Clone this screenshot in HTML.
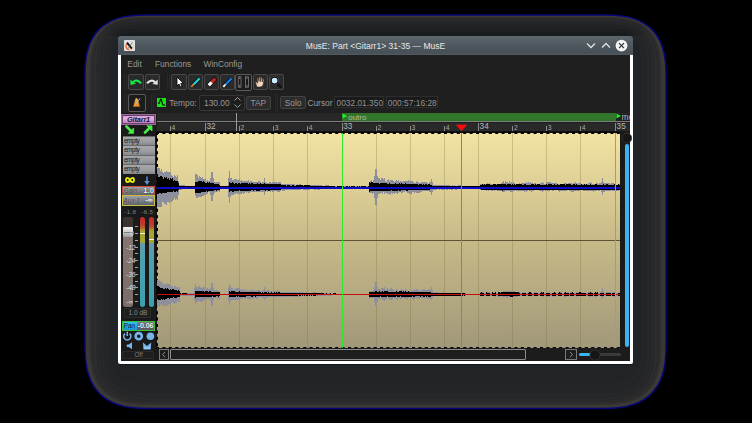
<!DOCTYPE html><html><head><meta charset="utf-8"><style>
html,body{margin:0;padding:0;background:#000;width:752px;height:423px;overflow:hidden;font-family:"Liberation Sans",sans-serif}
div{box-sizing:border-box;position:absolute}
</style></head><body>
<svg style="position:absolute;left:0;top:0" width="752" height="423"><path d="M84.20 78.30 L84.43 66.84 L85.11 59.23 L86.25 52.70 L87.85 46.88 L89.89 41.64 L92.38 36.89 L95.31 32.61 L98.69 28.79 L102.51 25.41 L106.79 22.48 L111.54 19.99 L116.78 17.95 L122.60 16.35 L129.13 15.21 L136.74 14.53 L148.20 14.30 L602.80 14.30 L614.26 14.53 L621.87 15.21 L628.40 16.35 L634.22 17.95 L639.46 19.99 L644.21 22.48 L648.49 25.41 L652.31 28.79 L655.69 32.61 L658.62 36.89 L661.11 41.64 L663.15 46.88 L664.75 52.70 L665.89 59.23 L666.57 66.84 L666.80 78.30 L666.80 343.20 L666.56 355.01 L665.86 362.87 L664.68 369.60 L663.04 375.60 L660.93 381.01 L658.37 385.90 L655.34 390.31 L651.86 394.26 L647.91 397.74 L643.50 400.77 L638.61 403.33 L633.20 405.44 L627.20 407.08 L620.47 408.26 L612.61 408.96 L600.80 409.20 L150.20 409.20 L138.39 408.96 L130.53 408.26 L123.80 407.08 L117.80 405.44 L112.39 403.33 L107.50 400.77 L103.09 397.74 L99.14 394.26 L95.66 390.31 L92.63 385.90 L90.07 381.01 L87.96 375.60 L86.32 369.60 L85.14 362.87 L84.44 355.01 L84.20 343.20 Z" fill="#06067a"/><path d="M85.70 77.85 L85.92 66.74 L86.59 59.36 L87.69 53.03 L89.23 47.39 L91.21 42.30 L93.63 37.70 L96.47 33.56 L99.75 29.85 L103.46 26.57 L107.60 23.73 L112.20 21.31 L117.29 19.33 L122.93 17.79 L129.26 16.69 L136.64 16.02 L147.75 15.80 L603.25 15.80 L614.36 16.02 L621.74 16.69 L628.07 17.79 L633.71 19.33 L638.80 21.31 L643.40 23.73 L647.54 26.57 L651.25 29.85 L654.53 33.56 L657.37 37.70 L659.79 42.30 L661.77 47.39 L663.31 53.03 L664.41 59.36 L665.08 66.74 L665.30 77.85 L665.30 343.35 L665.07 354.87 L664.38 362.53 L663.24 369.09 L661.63 374.94 L659.58 380.21 L657.08 384.99 L654.13 389.29 L650.73 393.13 L646.89 396.53 L642.59 399.48 L637.81 401.98 L632.54 404.03 L626.69 405.64 L620.13 406.78 L612.47 407.47 L600.95 407.70 L150.05 407.70 L138.53 407.47 L130.87 406.78 L124.31 405.64 L118.46 404.03 L113.19 401.98 L108.41 399.48 L104.11 396.53 L100.27 393.13 L96.87 389.29 L93.92 384.99 L91.42 380.21 L89.37 374.94 L87.76 369.09 L86.62 362.53 L85.93 354.87 L85.70 343.35 Z" fill="#3a3935"/><path d="M89.70 73.75 L89.90 63.57 L90.51 56.81 L91.52 51.01 L92.94 45.84 L94.75 41.18 L96.96 36.97 L99.57 33.17 L102.57 29.77 L105.97 26.77 L109.77 24.16 L113.98 21.95 L118.64 20.14 L123.81 18.72 L129.61 17.71 L136.37 17.10 L146.55 16.90 L604.45 16.90 L614.63 17.10 L621.39 17.71 L627.19 18.72 L632.36 20.14 L637.02 21.95 L641.23 24.16 L645.03 26.77 L648.43 29.77 L651.43 33.17 L654.04 36.97 L656.25 41.18 L658.06 45.84 L659.48 51.01 L660.49 56.81 L661.10 63.57 L661.30 73.75 L661.30 344.75 L661.09 355.48 L660.44 362.62 L659.38 368.73 L657.89 374.18 L655.97 379.09 L653.64 383.54 L650.89 387.54 L647.73 391.13 L644.14 394.29 L640.14 397.04 L635.69 399.37 L630.78 401.29 L625.33 402.78 L619.22 403.84 L612.08 404.49 L601.35 404.70 L149.65 404.70 L138.92 404.49 L131.78 403.84 L125.67 402.78 L120.22 401.29 L115.31 399.37 L110.86 397.04 L106.86 394.29 L103.27 391.13 L100.11 387.54 L97.36 383.54 L95.03 379.09 L93.11 374.18 L91.62 368.73 L90.56 362.62 L89.91 355.48 L89.70 344.75 Z" fill="#302f2e"/><path d="M91.70 72.55 L91.89 62.84 L92.47 56.38 L93.44 50.85 L94.79 45.92 L96.52 41.47 L98.63 37.45 L101.12 33.82 L103.98 30.58 L107.22 27.72 L110.85 25.23 L114.87 23.12 L119.32 21.39 L124.25 20.04 L129.78 19.07 L136.24 18.49 L145.95 18.30 L605.05 18.30 L614.76 18.49 L621.22 19.07 L626.75 20.04 L631.68 21.39 L636.13 23.12 L640.15 25.23 L643.78 27.72 L647.02 30.58 L649.88 33.82 L652.37 37.45 L654.48 41.47 L656.21 45.92 L657.56 50.85 L658.53 56.38 L659.11 62.84 L659.30 72.55 L659.30 344.95 L659.09 355.29 L658.48 362.16 L657.45 368.05 L656.01 373.30 L654.17 378.03 L651.92 382.32 L649.27 386.17 L646.22 389.62 L642.77 392.67 L638.92 395.32 L634.63 397.57 L629.90 399.41 L624.65 400.85 L618.76 401.88 L611.89 402.49 L601.55 402.70 L149.45 402.70 L139.11 402.49 L132.24 401.88 L126.35 400.85 L121.10 399.41 L116.37 397.57 L112.08 395.32 L108.23 392.67 L104.78 389.62 L101.73 386.17 L99.08 382.32 L96.83 378.03 L94.99 373.30 L93.55 368.05 L92.52 362.16 L91.91 355.29 L91.70 344.95 Z" fill="#2a2a2c"/><path d="M93.70 71.95 L93.88 62.71 L94.44 56.56 L95.36 51.29 L96.64 46.60 L98.29 42.36 L100.30 38.53 L102.67 35.08 L105.39 31.99 L108.48 29.27 L111.93 26.90 L115.76 24.89 L120.00 23.24 L124.69 21.96 L129.96 21.04 L136.11 20.48 L145.35 20.30 L605.65 20.30 L614.89 20.48 L621.04 21.04 L626.31 21.96 L631.00 23.24 L635.24 24.89 L639.07 26.90 L642.52 29.27 L645.61 31.99 L648.33 35.08 L650.70 38.53 L652.71 42.36 L654.36 46.60 L655.64 51.29 L656.56 56.56 L657.12 62.71 L657.30 71.95 L657.30 346.15 L657.10 356.09 L656.51 362.71 L655.52 368.37 L654.14 373.42 L652.36 377.97 L650.20 382.09 L647.65 385.80 L644.72 389.12 L641.40 392.05 L637.69 394.60 L633.57 396.76 L629.02 398.54 L623.97 399.92 L618.31 400.91 L611.69 401.50 L601.75 401.70 L149.25 401.70 L139.31 401.50 L132.69 400.91 L127.03 399.92 L121.98 398.54 L117.43 396.76 L113.31 394.60 L109.60 392.05 L106.28 389.12 L103.35 385.80 L100.80 382.09 L98.64 377.97 L96.86 373.42 L95.48 368.37 L94.49 362.71 L93.90 356.09 L93.70 346.15 Z" fill="#2c2d2d"/><path d="M96.20 69.70 L96.37 61.04 L96.89 55.28 L97.75 50.34 L98.96 45.94 L100.50 41.97 L102.38 38.38 L104.60 35.15 L107.16 32.26 L110.05 29.70 L113.28 27.48 L116.87 25.60 L120.84 24.06 L125.24 22.85 L130.18 21.99 L135.94 21.47 L144.60 21.30 L606.40 21.30 L615.06 21.47 L620.82 21.99 L625.76 22.85 L630.16 24.06 L634.13 25.60 L637.72 27.48 L640.95 29.70 L643.84 32.26 L646.40 35.15 L648.62 38.38 L650.50 41.97 L652.04 45.94 L653.25 50.34 L654.11 55.28 L654.63 61.04 L654.80 69.70 L654.80 347.90 L654.61 357.35 L654.05 363.64 L653.11 369.02 L651.79 373.82 L650.11 378.15 L648.05 382.06 L645.63 385.59 L642.85 388.75 L639.69 391.53 L636.16 393.95 L632.25 396.01 L627.92 397.69 L623.12 399.01 L617.74 399.95 L611.45 400.51 L602.00 400.70 L149.00 400.70 L139.55 400.51 L133.26 399.95 L127.88 399.01 L123.08 397.69 L118.75 396.01 L114.84 393.95 L111.31 391.53 L108.15 388.75 L105.37 385.59 L102.95 382.06 L100.89 378.15 L99.21 373.82 L97.89 369.02 L96.95 363.64 L96.39 357.35 L96.20 347.90 Z" fill="#27282c"/><path d="M97.20 69.40 L97.37 60.97 L97.87 55.36 L98.71 50.56 L99.88 46.28 L101.39 42.42 L103.22 38.93 L105.38 35.78 L107.86 32.96 L110.68 30.48 L113.83 28.32 L117.32 26.49 L121.18 24.98 L125.46 23.81 L130.26 22.97 L135.87 22.47 L144.30 22.30 L606.70 22.30 L615.13 22.47 L620.74 22.97 L625.54 23.81 L629.82 24.98 L633.68 26.49 L637.17 28.32 L640.32 30.48 L643.14 32.96 L645.62 35.78 L647.78 38.93 L649.61 42.42 L651.12 46.28 L652.29 50.56 L653.13 55.36 L653.63 60.97 L653.80 69.40 L653.80 348.00 L653.62 357.25 L653.06 363.41 L652.14 368.68 L650.86 373.38 L649.21 377.62 L647.19 381.45 L644.82 384.91 L642.09 387.99 L639.01 390.72 L635.55 393.09 L631.72 395.11 L627.48 396.76 L622.78 398.04 L617.51 398.96 L611.35 399.52 L602.10 399.70 L148.90 399.70 L139.65 399.52 L133.49 398.96 L128.22 398.04 L123.52 396.76 L119.28 395.11 L115.45 393.09 L111.99 390.72 L108.91 387.99 L106.18 384.91 L103.81 381.45 L101.79 377.62 L100.14 373.38 L98.86 368.68 L97.94 363.41 L97.38 357.25 L97.20 348.00 Z" fill="#28292a"/><path d="M100.20 68.00 L100.35 60.27 L100.82 55.13 L101.59 50.72 L102.66 46.79 L104.04 43.25 L105.72 40.05 L107.70 37.16 L109.98 34.58 L112.56 32.30 L115.45 30.32 L118.65 28.64 L122.19 27.26 L126.12 26.19 L130.53 25.42 L135.67 24.95 L143.40 24.80 L607.60 24.80 L615.33 24.95 L620.47 25.42 L624.88 26.19 L628.81 27.26 L632.35 28.64 L635.55 30.32 L638.44 32.30 L641.02 34.58 L643.30 37.16 L645.28 40.05 L646.96 43.25 L648.34 46.79 L649.41 50.72 L650.18 55.13 L650.65 60.27 L650.80 68.00 L650.80 348.80 L650.63 357.46 L650.11 363.22 L649.25 368.16 L648.04 372.56 L646.50 376.53 L644.62 380.12 L642.40 383.35 L639.84 386.24 L636.95 388.80 L633.72 391.02 L630.13 392.90 L626.16 394.44 L621.76 395.65 L616.82 396.51 L611.06 397.03 L602.40 397.20 L148.60 397.20 L139.94 397.03 L134.18 396.51 L129.24 395.65 L124.84 394.44 L120.87 392.90 L117.28 391.02 L114.05 388.80 L111.16 386.24 L108.60 383.35 L106.38 380.12 L104.50 376.53 L102.96 372.56 L101.75 368.16 L100.89 363.22 L100.37 357.46 L100.20 348.80 Z" fill="#242629"/><path d="M101.20 67.70 L101.35 60.20 L101.80 55.21 L102.54 50.94 L103.59 47.13 L104.92 43.70 L106.55 40.59 L108.48 37.79 L110.69 35.29 L113.19 33.08 L115.99 31.15 L119.10 29.52 L122.53 28.19 L126.34 27.14 L130.61 26.40 L135.60 25.95 L143.10 25.80 L607.90 25.80 L615.40 25.95 L620.39 26.40 L624.66 27.14 L628.47 28.19 L631.90 29.52 L635.01 31.15 L637.81 33.08 L640.31 35.29 L642.52 37.79 L644.45 40.59 L646.08 43.70 L647.41 47.13 L648.46 50.94 L649.20 55.21 L649.65 60.20 L649.80 67.70 L649.80 348.90 L649.63 357.37 L649.13 363.00 L648.28 367.82 L647.11 372.12 L645.60 376.00 L643.76 379.50 L641.59 382.66 L639.09 385.49 L636.26 387.99 L633.10 390.16 L629.60 392.00 L625.72 393.51 L621.42 394.68 L616.60 395.53 L610.97 396.03 L602.50 396.20 L148.50 396.20 L140.03 396.03 L134.40 395.53 L129.58 394.68 L125.28 393.51 L121.40 392.00 L117.90 390.16 L114.74 387.99 L111.91 385.49 L109.41 382.66 L107.24 379.50 L105.40 376.00 L103.89 372.12 L102.72 367.82 L101.87 363.00 L101.37 357.37 L101.20 348.90 Z" fill="#26282a"/><path d="M104.20 66.30 L104.34 59.50 L104.74 54.98 L105.42 51.10 L106.36 47.65 L107.58 44.53 L109.06 41.71 L110.80 39.17 L112.80 36.90 L115.07 34.90 L117.61 33.16 L120.43 31.68 L123.55 30.46 L127.00 29.52 L130.88 28.84 L135.40 28.44 L142.20 28.30 L608.80 28.30 L615.60 28.44 L620.12 28.84 L624.00 29.52 L627.45 30.46 L630.57 31.68 L633.39 33.16 L635.93 34.90 L638.20 36.90 L640.20 39.17 L641.94 41.71 L643.42 44.53 L644.64 47.65 L645.58 51.10 L646.26 54.98 L646.66 59.50 L646.80 66.30 L646.80 349.20 L646.64 357.08 L646.17 362.31 L645.39 366.80 L644.29 370.80 L642.89 374.41 L641.18 377.67 L639.16 380.61 L636.84 383.24 L634.21 385.56 L631.27 387.58 L628.01 389.29 L624.40 390.69 L620.40 391.79 L615.91 392.57 L610.68 393.04 L602.80 393.20 L148.20 393.20 L140.32 393.04 L135.09 392.57 L130.60 391.79 L126.60 390.69 L122.99 389.29 L119.73 387.58 L116.79 385.56 L114.16 383.24 L111.84 380.61 L109.82 377.67 L108.11 374.41 L106.71 370.80 L105.61 366.80 L104.83 362.31 L104.36 357.08 L104.20 349.20 Z" fill="#222628"/><path d="M110.20 62.50 L110.31 57.09 L110.63 53.50 L111.17 50.42 L111.92 47.67 L112.88 45.20 L114.06 42.96 L115.44 40.94 L117.04 39.14 L118.84 37.54 L120.86 36.16 L123.10 34.98 L125.57 34.02 L128.32 33.27 L131.40 32.73 L134.99 32.41 L140.40 32.30 L610.60 32.30 L616.01 32.41 L619.60 32.73 L622.68 33.27 L625.43 34.02 L627.90 34.98 L630.14 36.16 L632.16 37.54 L633.96 39.14 L635.56 40.94 L636.94 42.96 L638.12 45.20 L639.08 47.67 L639.83 50.42 L640.37 53.50 L640.69 57.09 L640.80 62.50 L640.80 345.80 L640.67 352.49 L640.27 356.95 L639.60 360.76 L638.67 364.16 L637.48 367.23 L636.02 370.00 L634.31 372.50 L632.33 374.73 L630.10 376.71 L627.60 378.42 L624.83 379.88 L621.76 381.07 L618.36 382.00 L614.55 382.67 L610.09 383.07 L603.40 383.20 L147.60 383.20 L140.91 383.07 L136.45 382.67 L132.64 382.00 L129.24 381.07 L126.17 379.88 L123.40 378.42 L120.90 376.71 L118.67 374.73 L116.69 372.50 L114.98 370.00 L113.52 367.23 L112.33 364.16 L111.40 360.76 L110.73 356.95 L110.33 352.49 L110.20 345.80 Z" fill="#202426"/></svg>
<div style="left:104.00px;top:20.30px;width:543.00px;height:15.70px;background:linear-gradient(rgba(0,0,0,0),rgba(0,0,0,0.25));-webkit-mask-image:linear-gradient(to right,transparent,#000 20px,#000 calc(100% - 20px),transparent)"></div>
<div style="left:119.00px;top:363.70px;width:513.00px;height:1.30px;background:#141516"></div>
<div style="left:118.00px;top:54.00px;width:515.00px;height:310.00px;background:#fff;border-radius:0 0 2px 2px"></div>
<div style="left:118.00px;top:36.00px;width:515.00px;height:18.60px;background:linear-gradient(#5c666d,#4f585f 50%,#475057 90%,#545d64);border-radius:3px 3px 0 0"></div>
<svg style="position:absolute;left:124px;top:40px;" width="11" height="11" viewBox="0 0 11 11"><rect x="0" y="0" width="11" height="11" rx="0.8" fill="#dfe3e6"/><path d="M4.2 3.2 A3.3 3.3 0 0 0 5.5 9.6" fill="none" stroke="#ec6a2a" stroke-width="1.3"/><path d="M5.5 9.6 A3.3 3.3 0 0 0 8.2 4" fill="none" stroke="#f2c890" stroke-width="1"/><path d="M3 2.6 L7.8 8.6" stroke="#0c0c0c" stroke-width="1.8"/><path d="M8.6 2.2 L4 8.4" stroke="#5a5a5a" stroke-width="0.7"/></svg>
<div style="left:305.80px;top:41.60px;font-size:8.5px;line-height:8.5px;color:#e6e8ea;white-space:pre;">MusE: Part &lt;Gitarr1&gt; 31-35 — MusE</div>
<svg style="position:absolute;left:586px;top:42px;" width="10" height="7" viewBox="0 0 10 7"><path d="M1 1.5 L5 5.5 L9 1.5" fill="none" stroke="#e0e2e4" stroke-width="1.3"/></svg>
<svg style="position:absolute;left:601px;top:42px;" width="10" height="7" viewBox="0 0 10 7"><path d="M1 5.5 L5 1.5 L9 5.5" fill="none" stroke="#e0e2e4" stroke-width="1.3"/></svg>
<svg style="position:absolute;left:615px;top:39px;" width="13" height="13" viewBox="0 0 13 13"><circle cx="6.5" cy="6.6" r="5.9" fill="#f4f4f4"/><path d="M4 4.1 L9 9.1 M9 4.1 L4 9.1" stroke="#2a2e32" stroke-width="1.2"/></svg>
<div style="left:121.00px;top:54.60px;width:509.00px;height:306.40px;background:#1f1f1f"></div>
<div style="left:127.30px;top:60.10px;font-size:8.4px;line-height:8.4px;color:#989898;white-space:pre;">Edit</div>
<div style="left:155.00px;top:60.10px;font-size:8.4px;line-height:8.4px;color:#989898;white-space:pre;">Functions</div>
<div style="left:203.50px;top:60.10px;font-size:8.4px;line-height:8.4px;color:#989898;white-space:pre;">WinConfig</div>
<div style="left:123.50px;top:74.00px;width:1.00px;height:16.00px;background:#292929"></div>
<div style="left:125.50px;top:74.00px;width:1.00px;height:16.00px;background:#292929"></div>
<div style="left:166.80px;top:74.00px;width:1.00px;height:16.00px;background:#292929"></div>
<div style="left:168.80px;top:74.00px;width:1.00px;height:16.00px;background:#292929"></div>
<div style="left:123.50px;top:94.00px;width:1.00px;height:18.00px;background:#292929"></div>
<div style="left:125.50px;top:94.00px;width:1.00px;height:18.00px;background:#292929"></div>
<div style="left:151.00px;top:94.00px;width:1.00px;height:18.00px;background:#292929"></div>
<div style="left:153.00px;top:94.00px;width:1.00px;height:18.00px;background:#292929"></div>
<div style="left:275.00px;top:94.00px;width:1.00px;height:18.00px;background:#292929"></div>
<div style="left:277.00px;top:94.00px;width:1.00px;height:18.00px;background:#292929"></div>
<div style="left:128.20px;top:74.40px;width:16.00px;height:15.40px;background:#2a2a2a;border:1px solid #484848;border-radius:2px"></div>
<div style="left:144.60px;top:74.40px;width:15.40px;height:15.40px;background:#2a2a2a;border:1px solid #484848;border-radius:2px"></div>
<div style="left:171.20px;top:74.40px;width:15.40px;height:15.40px;background:#2a2a2a;border:1px solid #484848;border-radius:2px"></div>
<div style="left:187.60px;top:74.40px;width:15.40px;height:15.40px;background:#2a2a2a;border:1px solid #484848;border-radius:2px"></div>
<div style="left:203.60px;top:74.40px;width:15.40px;height:15.40px;background:#2a2a2a;border:1px solid #484848;border-radius:2px"></div>
<div style="left:219.60px;top:74.40px;width:15.40px;height:15.40px;background:#2a2a2a;border:1px solid #484848;border-radius:2px"></div>
<div style="left:235.40px;top:73.60px;width:16.60px;height:17.20px;background:#1c1c1c;border:1px solid #5a5a5a;border-radius:2px"></div>
<div style="left:252.70px;top:74.40px;width:15.40px;height:15.40px;background:#2a2a2a;border:1px solid #484848;border-radius:2px"></div>
<div style="left:268.70px;top:74.40px;width:15.40px;height:15.40px;background:#2a2a2a;border:1px solid #484848;border-radius:2px"></div>
<svg style="position:absolute;left:122px;top:70px;" width="40" height="20" viewBox="0 0 40 20"><path d="M8.6 10.2 L8.8 14.6 L13.4 13.6 Z" fill="#14e84a" stroke="#14e84a" stroke-width="0.6" stroke-linejoin="round"/><path d="M11.2 12 Q14.5 8.6 19.2 13.2" fill="none" stroke="#14e84a" stroke-width="2.1"/><path d="M35.5 10.2 L35.3 14.6 L30.9 13.6 Z" fill="#e4e4e4" stroke="#e4e4e4" stroke-width="0.6" stroke-linejoin="round"/><path d="M33 12 Q29.6 8.6 25 13.2" fill="none" stroke="#e4e4e4" stroke-width="2.1"/></svg>
<svg style="position:absolute;left:174px;top:76px;" width="11" height="12" viewBox="0 0 11 12"><path d="M3 1 L3 10 L5 8 L6.5 11 L8 10.3 L6.7 7.5 L9.3 7.3 Z" fill="#fff" stroke="#000" stroke-width="0.8"/></svg>
<svg style="position:absolute;left:189.6px;top:76.4px;" width="12" height="12" viewBox="0 0 12 12"><path d="M2.2 9.8 L9.5 2.5" stroke="#000" stroke-width="3.4"/><path d="M3 9 L9.6 2.4" stroke="#20d0d0" stroke-width="2.2"/><path d="M1.2 10.8 L3.3 8.7" stroke="#e07020" stroke-width="2"/></svg>
<svg style="position:absolute;left:205.6px;top:76.4px;" width="12" height="12" viewBox="0 0 12 12"><path d="M2.3 9.7 L9.7 2.3" stroke="#000" stroke-width="4.2"/><path d="M5.5 6.5 L9.3 2.7" stroke="#c02828" stroke-width="3.2"/><path d="M2.7 9.3 L5.6 6.4" stroke="#fff" stroke-width="3.2"/></svg>
<svg style="position:absolute;left:221.6px;top:76.4px;" width="12" height="12" viewBox="0 0 12 12"><path d="M2.2 9.8 L9.5 2.5" stroke="#000" stroke-width="3.4"/><path d="M3.5 8.5 L9.6 2.4" stroke="#1080f0" stroke-width="2.2"/><path d="M1.3 10.7 L3.6 8.4" stroke="#f0f0f0" stroke-width="2"/></svg>
<svg style="position:absolute;left:237px;top:76px;" width="13" height="12" viewBox="0 0 13 12"><rect x="1.2" y="0.8" width="2.8" height="10.4" fill="#1a1a1a" stroke="#8a8a8a" stroke-width="0.7"/><rect x="8.6" y="0.8" width="2.8" height="10.4" fill="#1a1a1a" stroke="#8a8a8a" stroke-width="0.7"/><rect x="2.1" y="1.6" width="1" height="1" fill="#bbb"/><rect x="2.1" y="9.4" width="1" height="1" fill="#bbb"/><rect x="9.5" y="1.6" width="1" height="1" fill="#bbb"/><rect x="9.5" y="9.4" width="1" height="1" fill="#bbb"/></svg>
<svg style="position:absolute;left:254.4px;top:76px;" width="12" height="12" viewBox="0 0 12 12"><path d="M3 11 L1.5 6.5 Q1.5 5.5 2.6 6 L3.6 7.2 L3.4 2.4 Q3.8 1.5 4.5 2.3 L5 5.6 L5.2 1.3 Q5.8 0.6 6.4 1.3 L6.6 5.6 L7.2 1.8 Q7.8 1.2 8.3 2 L8.2 6 L9 3.3 Q9.6 2.8 10 3.6 L9.2 8.5 Q8.6 11 6 11 Z" fill="#f0d8c0" stroke="#3a2a20" stroke-width="0.6"/></svg>
<svg style="position:absolute;left:269.5px;top:75.5px;" width="13" height="13" viewBox="0 0 13 13"><path d="M7 7.3 L11.2 11.5" stroke="#000" stroke-width="2.2"/><path d="M7 7.3 L11 11.3" stroke="#444" stroke-width="0.6"/><circle cx="4.6" cy="4.6" r="3.5" fill="#c8eeff" stroke="#000" stroke-width="1.3"/><circle cx="4.6" cy="4.6" r="4.3" fill="none" stroke="#777" stroke-width="0.4"/></svg>
<div style="left:128.00px;top:94.00px;width:18.00px;height:17.50px;background:#1c1c1c;border:1px solid #5a5a5a;border-radius:2px"></div>
<svg style="position:absolute;left:131px;top:97px;" width="12" height="12" viewBox="0 0 12 12"><defs><linearGradient id="mg" x1="0" y1="0" x2="0" y2="1"><stop offset="0" stop-color="#f8c040"/><stop offset="1" stop-color="#e88010"/></linearGradient></defs><path d="M4.4 1 L6.6 1 L9.4 10 L1.8 10 Z" fill="url(#mg)" stroke="#141a2a" stroke-width="0.6"/><path d="M3.6 9.2 L9 1.5" stroke="#b8b8c0" stroke-width="0.9"/></svg>
<svg style="position:absolute;left:157px;top:98px;" width="9" height="9" viewBox="0 0 9 9"><rect x="0" y="0" width="9" height="9" fill="#14e414"/><path d="M0.8 5.2 L2.4 5 L3.4 1.4 L4.2 1.4 L5.8 6.8 L8.2 7.4" fill="none" stroke="#000" stroke-width="1.1"/></svg>
<div style="left:169.20px;top:99.00px;font-size:8.4px;line-height:8.4px;color:#989898;white-space:pre;">Tempo:</div>
<div style="left:199.30px;top:94.50px;width:45.40px;height:16.50px;background:#1e1e1e;border:1px solid #353535;border-radius:2px"></div>
<div style="left:204.00px;top:99.00px;font-size:8.4px;line-height:8.4px;color:#989898;white-space:pre;">130.00</div>
<svg style="position:absolute;left:233px;top:96px;" width="9" height="13" viewBox="0 0 9 13"><path d="M1.5 4.5 L4.5 1.5 L7.5 4.5 M1.5 8.5 L4.5 11.5 L7.5 8.5" fill="none" stroke="#a0a0a0" stroke-width="1"/></svg>
<div style="left:245.50px;top:95.60px;width:25.20px;height:14.40px;background:#2c2c2c;border:1px solid #434343;border-radius:2px"></div>
<div style="left:250.50px;top:99.20px;font-size:8.4px;line-height:8.4px;color:#989898;white-space:pre;">TAP</div>
<div style="left:280.00px;top:95.70px;width:26.20px;height:13.50px;background:#2c2c2c;border:1px solid #434343;border-radius:2px"></div>
<div style="left:284.70px;top:99.20px;font-size:8.4px;line-height:8.4px;color:#989898;white-space:pre;">Solo</div>
<div style="left:307.40px;top:99.00px;font-size:8.4px;line-height:8.4px;color:#989898;white-space:pre;">Cursor</div>
<div style="left:333.70px;top:96.20px;width:50.30px;height:11.60px;background:#1b1b1b;border:1px solid #2e2e2e"></div>
<div style="left:336.50px;top:99.20px;font-size:8.4px;line-height:8.4px;color:#939393;white-space:pre;">0032.01.350</div>
<div style="left:385.90px;top:96.20px;width:52.60px;height:11.60px;background:#1b1b1b;border:1px solid #2e2e2e"></div>
<div style="left:387.80px;top:99.20px;font-size:8.4px;line-height:8.4px;color:#939393;white-space:pre;">000:57:16:28</div>
<div style="left:121.00px;top:113.00px;width:36.00px;height:248.00px;background:#1a1a1a"></div>
<div style="left:121.10px;top:114.00px;width:35.00px;height:10.80px;background:#c990c9;border:1px solid #9a6a9a"></div>
<div style="left:122.30px;top:115.00px;width:32.60px;height:8.80px;background:linear-gradient(#d8a4d8,#e0b0e0 40%,#c07cc0);border:1px solid #6a406a"></div>
<div style="left:126.90px;top:116.00px;font-size:7.4px;line-height:7.4px;color:#10183a;white-space:pre;font-weight:bold;font-style:italic;letter-spacing:-0.15px">Gitarr1</div>
<svg style="position:absolute;left:125px;top:125px;" width="10" height="9" viewBox="0 0 10 9"><path d="M1.5 1.5 L6 6" stroke="#48ec48" stroke-width="2.6" stroke-linecap="round"/><path d="M8.6 3 L8.6 8.3 L3.3 8.3 Z" fill="#48ec48" stroke="#48ec48" stroke-width="0.8" stroke-linejoin="round"/></svg>
<svg style="position:absolute;left:142.5px;top:125px;" width="10" height="9" viewBox="0 0 10 9"><path d="M2 7.5 L6.5 3" stroke="#48ec48" stroke-width="2.6" stroke-linecap="round"/><path d="M3.8 0.8 L9 0.8 L9 6 Z" fill="#48ec48" stroke="#48ec48" stroke-width="0.8" stroke-linejoin="round"/></svg>
<div style="left:122.50px;top:135.90px;width:32.70px;height:9.30px;background:linear-gradient(#a6a8ac,#9a9ca0 60%,#85878a);border-top:1px solid #66686a"></div>
<div style="left:123.90px;top:137.80px;font-size:6.5px;line-height:6.5px;color:#141414;white-space:pre;letter-spacing:-0.45px">empty</div>
<div style="left:122.50px;top:145.35px;width:32.70px;height:9.30px;background:linear-gradient(#a6a8ac,#9a9ca0 60%,#85878a);border-top:1px solid #66686a"></div>
<div style="left:123.90px;top:147.25px;font-size:6.5px;line-height:6.5px;color:#141414;white-space:pre;letter-spacing:-0.45px">empty</div>
<div style="left:122.50px;top:154.80px;width:32.70px;height:9.30px;background:linear-gradient(#a6a8ac,#9a9ca0 60%,#85878a);border-top:1px solid #66686a"></div>
<div style="left:123.90px;top:156.70px;font-size:6.5px;line-height:6.5px;color:#141414;white-space:pre;letter-spacing:-0.45px">empty</div>
<div style="left:122.50px;top:164.25px;width:32.70px;height:9.30px;background:linear-gradient(#a6a8ac,#9a9ca0 60%,#85878a);border-top:1px solid #66686a"></div>
<div style="left:123.90px;top:166.15px;font-size:6.5px;line-height:6.5px;color:#141414;white-space:pre;letter-spacing:-0.45px">empty</div>
<svg style="position:absolute;left:125px;top:176px;" width="10" height="8" viewBox="0 0 10 8"><path d="M5 4 C3.5 1.2 1 1.2 1 4 C1 6.8 3.5 6.8 5 4 C6.5 1.2 9 1.2 9 4 C9 6.8 6.5 6.8 5 4 Z" fill="none" stroke="#f0f000" stroke-width="1.8"/></svg>
<svg style="position:absolute;left:143px;top:175.5px;" width="8" height="10" viewBox="0 0 8 10"><path d="M4 0.5 L4 6" stroke="#5a90c8" stroke-width="1.5"/><path d="M1.2 5 L6.8 5 L4 9 Z" fill="#5a90c8"/></svg>
<div style="left:122.10px;top:185.50px;width:32.80px;height:10.00px;background:linear-gradient(#9aa0a6,#7a8088 50%,#5e646c);border:1px solid #b04a40;border-top:1.5px solid #d84a40;border-bottom:1px solid #e06030"></div>
<div style="left:123.80px;top:187.60px;font-size:6.4px;line-height:6.4px;color:#3a3530;white-space:pre;text-shadow:0 0 1px #d0d0d0">Gain</div>
<div style="left:143.30px;top:187.00px;font-size:7.6px;line-height:7.6px;color:#f4f4f4;white-space:pre;font-weight:bold;text-shadow:0 0 1px #000">1.0</div>
<div style="left:122.10px;top:195.30px;width:32.80px;height:10.50px;background:linear-gradient(#9aa0a6,#7a8088 50%,#5e646c);border:1px solid #c8c040;border-top:1px solid #d8b838"></div>
<div style="left:123.60px;top:197.80px;font-size:6.4px;line-height:6.4px;color:#3a3530;white-space:pre;font-style:italic;text-shadow:0 0 1px #d0d0d0">Aux 1</div>
<div style="left:145.60px;top:197.40px;font-size:6.4px;line-height:6.4px;color:#f4f4f4;white-space:pre;font-weight:bold">-∞</div>
<div style="left:124.30px;top:209.00px;font-size:6.2px;line-height:6.2px;color:#808080;white-space:pre;letter-spacing:0.3px">-1.8</div>
<div style="left:141.60px;top:209.00px;font-size:6.2px;line-height:6.2px;color:#808080;white-space:pre;letter-spacing:0.2px">-6.5</div>
<div style="left:123.40px;top:217.00px;width:9.50px;height:90.00px;background:linear-gradient(#3a3330 0,#3a3330 11%,#857670 11%,#7a6c66 100%);border-radius:2.5px"></div>
<div style="left:122.80px;top:227.00px;width:10.60px;height:10.00px;background:linear-gradient(#f4f4f4,#c8c8c8 55%,#9a9a9a);border-radius:1px"></div>
<div style="left:123.60px;top:232.00px;width:9.00px;height:0.80px;background:#7a7a7a"></div>
<div style="left:130.00px;top:231.00px;font-size:6.6px;line-height:6.6px;color:#dcdcdc;white-space:pre;font-style:italic">0</div>
<div style="left:126.00px;top:244.60px;font-size:6.6px;line-height:6.6px;color:#dcdcdc;white-space:pre;font-style:italic">-12</div>
<div style="left:126.00px;top:258.20px;font-size:6.6px;line-height:6.6px;color:#dcdcdc;white-space:pre;font-style:italic">-24</div>
<div style="left:126.00px;top:271.80px;font-size:6.6px;line-height:6.6px;color:#dcdcdc;white-space:pre;font-style:italic">-36</div>
<div style="left:126.00px;top:285.40px;font-size:6.6px;line-height:6.6px;color:#dcdcdc;white-space:pre;font-style:italic">-48</div>
<div style="left:126.00px;top:299.00px;font-size:6.6px;line-height:6.6px;color:#dcdcdc;white-space:pre;font-style:italic">-∞</div>
<div style="left:135.00px;top:226.20px;width:3.00px;height:1.00px;background:#a8a8a8"></div>
<div style="left:135.00px;top:233.00px;width:3.00px;height:1.00px;background:#a8a8a8"></div>
<div style="left:135.00px;top:239.80px;width:3.00px;height:1.00px;background:#a8a8a8"></div>
<div style="left:135.00px;top:246.60px;width:3.00px;height:1.00px;background:#a8a8a8"></div>
<div style="left:135.00px;top:253.40px;width:3.00px;height:1.00px;background:#a8a8a8"></div>
<div style="left:135.00px;top:260.20px;width:3.00px;height:1.00px;background:#a8a8a8"></div>
<div style="left:135.00px;top:267.00px;width:3.00px;height:1.00px;background:#a8a8a8"></div>
<div style="left:135.00px;top:273.80px;width:3.00px;height:1.00px;background:#a8a8a8"></div>
<div style="left:135.00px;top:280.60px;width:3.00px;height:1.00px;background:#a8a8a8"></div>
<div style="left:135.00px;top:287.40px;width:3.00px;height:1.00px;background:#a8a8a8"></div>
<div style="left:135.00px;top:294.20px;width:3.00px;height:1.00px;background:#a8a8a8"></div>
<div style="left:135.00px;top:301.00px;width:3.00px;height:1.00px;background:#a8a8a8"></div>
<div style="left:140.00px;top:217.00px;width:5.30px;height:90.00px;background:linear-gradient(#c42c2c 0,#c2382c 8%,#b86430 12.5%,#b08a2c 14%,#a8a430 15.5%,#a2a832 28.6%,#6a9aa8 29%,#52a0ae 40%,#3aa0b0 100%);border-radius:2.6px"></div>
<div style="left:140.00px;top:233.20px;width:5.30px;height:1.30px;background:#f4f4f4"></div>
<div style="left:148.90px;top:217.00px;width:5.30px;height:90.00px;background:linear-gradient(#c42c2c 0,#c2382c 8%,#b86430 12.5%,#b08a2c 14%,#a8a430 15.5%,#a2a832 28.6%,#6a9aa8 29%,#52a0ae 40%,#3aa0b0 100%);border-radius:2.6px"></div>
<div style="left:148.90px;top:239.20px;width:5.30px;height:1.30px;background:#f4f4f4"></div>
<div style="left:124.40px;top:308.20px;width:26.90px;height:10.00px;background:#1e1e1e;border:1px solid #2c2c2c;border-radius:1px"></div>
<div style="left:128.40px;top:310.30px;font-size:6.6px;line-height:6.6px;color:#8a8a8a;white-space:pre;">1.0 dB</div>
<div style="left:122.10px;top:320.60px;width:32.80px;height:10.10px;background:linear-gradient(#808086,#5a5a60);border:1px solid #3cc03c"></div>
<div style="left:123.10px;top:321.60px;width:14.10px;height:8.10px;background:linear-gradient(#30c0f4,#1890d0)"></div>
<div style="left:123.80px;top:323.00px;font-size:6.4px;line-height:6.4px;color:#10203a;white-space:pre;">Pan</div>
<div style="left:137.60px;top:322.40px;font-size:7.2px;line-height:7.2px;color:#ffffff;white-space:pre;letter-spacing:-0.1px;font-weight:bold;text-shadow:0 0 1px #000">-0.06</div>
<svg style="position:absolute;left:122px;top:331px;" width="34" height="20" viewBox="0 0 34 20"><path d="M3.0 2.6 A3.6 3.6 0 1 0 7.6 2.6" fill="none" stroke="#78b4ec" stroke-width="1.5"/><path d="M5.3 0.6 L5.3 5.0" stroke="#78b4ec" stroke-width="1.5"/><circle cx="16.75" cy="5.2" r="3.1" fill="none" stroke="#78b4ec" stroke-width="2.6"/><circle cx="28.4" cy="5.2" r="3.8" fill="#78b4ec"/><path d="M4.8 13.5 L6.6 13.5 L10 11.3 L10 18.3 L6.6 16.1 L4.8 16.1 Z" fill="#78b4ec"/><path d="M21 11.5 L25 15 L29.2 11.5 L28.8 18.6 L21.4 18.6 Z" fill="#78b4ec"/><path d="M22 17 L28 17" stroke="#a8d0f4" stroke-width="1.2"/></svg>
<div style="left:122.30px;top:351.40px;width:32.10px;height:7.40px;background:#1e1e1e;border:1px solid #2c2c2c;border-radius:1px"></div>
<div style="left:134.40px;top:352.40px;font-size:6.4px;line-height:6.4px;color:#7a7a7a;white-space:pre;">Off</div>
<div style="left:157.00px;top:112.70px;width:473.00px;height:9.00px;background:#272727"></div>
<div style="left:157.00px;top:121.10px;width:473.00px;height:1.25px;background:#7e7e7e"></div>
<div style="left:157.00px;top:122.70px;width:473.00px;height:8.60px;background:#292929"></div>
<div style="left:157.00px;top:131.30px;width:473.00px;height:1.70px;background:#111"></div>
<div style="left:342.20px;top:113.00px;width:273.40px;height:8.10px;background:linear-gradient(#2e7228,#347a2e 50%,#2e7228)"></div>
<svg style="position:absolute;left:342.2px;top:113.4px;" width="6" height="6" viewBox="0 0 6 6"><path d="M0.5 0.5 L5 3 L0.5 5.5 Z" fill="#20f020"/></svg>
<div style="left:348.20px;top:114.00px;font-size:8.0px;line-height:8.0px;color:#aebca6;white-space:pre;line-height:7px">outro</div>
<div style="left:615.60px;top:113.50px;width:14.40px;height:7.30px;background:#202020"></div>
<svg style="position:absolute;left:615.6px;top:113.4px;" width="6" height="6" viewBox="0 0 6 6"><path d="M0.5 0.5 L5 3 L0.5 5.5 Z" fill="#20f020"/></svg>
<div style="left:621.50px;top:113.80px;font-size:8.4px;line-height:8.4px;color:#b8b8b8;white-space:pre;line-height:7px;width:8.8px;overflow:hidden">mo</div>
<div style="left:169.90px;top:126.20px;width:1.00px;height:5.10px;background:#8a8a8a"></div>
<div style="left:171.60px;top:124.80px;font-size:6.8px;line-height:6.8px;color:#a8a8a8;white-space:pre;">4</div>
<div style="left:205.00px;top:122.60px;width:1.00px;height:8.70px;background:#8a8a8a"></div>
<div style="left:206.50px;top:123.00px;font-size:8.2px;line-height:8.2px;color:#b8b8b8;white-space:pre;">32</div>
<div style="left:238.90px;top:126.20px;width:1.00px;height:5.10px;background:#8a8a8a"></div>
<div style="left:240.60px;top:124.80px;font-size:6.8px;line-height:6.8px;color:#a8a8a8;white-space:pre;">2</div>
<div style="left:273.00px;top:126.20px;width:1.00px;height:5.10px;background:#8a8a8a"></div>
<div style="left:274.70px;top:124.80px;font-size:6.8px;line-height:6.8px;color:#a8a8a8;white-space:pre;">3</div>
<div style="left:307.10px;top:126.20px;width:1.00px;height:5.10px;background:#8a8a8a"></div>
<div style="left:308.80px;top:124.80px;font-size:6.8px;line-height:6.8px;color:#a8a8a8;white-space:pre;">4</div>
<div style="left:341.80px;top:122.60px;width:1.00px;height:8.70px;background:#8a8a8a"></div>
<div style="left:343.30px;top:123.00px;font-size:8.2px;line-height:8.2px;color:#b8b8b8;white-space:pre;">33</div>
<div style="left:375.90px;top:126.20px;width:1.00px;height:5.10px;background:#8a8a8a"></div>
<div style="left:377.60px;top:124.80px;font-size:6.8px;line-height:6.8px;color:#a8a8a8;white-space:pre;">2</div>
<div style="left:409.90px;top:126.20px;width:1.00px;height:5.10px;background:#8a8a8a"></div>
<div style="left:411.60px;top:124.80px;font-size:6.8px;line-height:6.8px;color:#a8a8a8;white-space:pre;">3</div>
<div style="left:444.00px;top:126.20px;width:1.00px;height:5.10px;background:#8a8a8a"></div>
<div style="left:445.70px;top:124.80px;font-size:6.8px;line-height:6.8px;color:#a8a8a8;white-space:pre;">4</div>
<div style="left:478.10px;top:122.60px;width:1.00px;height:8.70px;background:#8a8a8a"></div>
<div style="left:479.60px;top:123.00px;font-size:8.2px;line-height:8.2px;color:#b8b8b8;white-space:pre;">34</div>
<div style="left:512.20px;top:126.20px;width:1.00px;height:5.10px;background:#8a8a8a"></div>
<div style="left:513.90px;top:124.80px;font-size:6.8px;line-height:6.8px;color:#a8a8a8;white-space:pre;">2</div>
<div style="left:546.10px;top:126.20px;width:1.00px;height:5.10px;background:#8a8a8a"></div>
<div style="left:547.80px;top:124.80px;font-size:6.8px;line-height:6.8px;color:#a8a8a8;white-space:pre;">3</div>
<div style="left:580.00px;top:126.20px;width:1.00px;height:5.10px;background:#8a8a8a"></div>
<div style="left:581.70px;top:124.80px;font-size:6.8px;line-height:6.8px;color:#a8a8a8;white-space:pre;">4</div>
<div style="left:615.10px;top:122.60px;width:1.00px;height:8.70px;background:#8a8a8a"></div>
<div style="left:616.60px;top:123.00px;font-size:8.2px;line-height:8.2px;color:#b8b8b8;white-space:pre;">35</div>
<div style="left:235.90px;top:113.30px;width:1.00px;height:18.00px;background:#9a9a9a"></div>
<svg style="position:absolute;left:455px;top:124.2px;" width="13" height="8" viewBox="0 0 13 8"><path d="M0.3 0.5 L12.7 0.5 L6.5 7.2 Z" fill="#ff0a0a" stroke="#1a3a3a" stroke-width="0.4"/></svg>
<div style="left:157.00px;top:133.00px;width:463.20px;height:215.00px;background:linear-gradient(#f3e3a3,#c7ba88 50%,#a1987a)"></div>
<div style="left:169.90px;top:133.00px;width:1.00px;height:215.00px;background:rgba(120,105,50,0.28)"></div>
<div style="left:205.00px;top:133.00px;width:1.00px;height:215.00px;background:rgba(120,105,50,0.28)"></div>
<div style="left:238.90px;top:133.00px;width:1.00px;height:215.00px;background:rgba(120,105,50,0.28)"></div>
<div style="left:273.00px;top:133.00px;width:1.00px;height:215.00px;background:rgba(120,105,50,0.28)"></div>
<div style="left:307.10px;top:133.00px;width:1.00px;height:215.00px;background:rgba(120,105,50,0.28)"></div>
<div style="left:341.80px;top:133.00px;width:1.00px;height:215.00px;background:rgba(120,105,50,0.28)"></div>
<div style="left:375.90px;top:133.00px;width:1.00px;height:215.00px;background:rgba(120,105,50,0.28)"></div>
<div style="left:409.90px;top:133.00px;width:1.00px;height:215.00px;background:rgba(120,105,50,0.28)"></div>
<div style="left:444.00px;top:133.00px;width:1.00px;height:215.00px;background:rgba(120,105,50,0.28)"></div>
<div style="left:478.10px;top:133.00px;width:1.00px;height:215.00px;background:rgba(120,105,50,0.28)"></div>
<div style="left:512.20px;top:133.00px;width:1.00px;height:215.00px;background:rgba(120,105,50,0.28)"></div>
<div style="left:546.10px;top:133.00px;width:1.00px;height:215.00px;background:rgba(120,105,50,0.28)"></div>
<div style="left:580.00px;top:133.00px;width:1.00px;height:215.00px;background:rgba(120,105,50,0.28)"></div>
<div style="left:615.10px;top:133.00px;width:1.00px;height:215.00px;background:rgba(120,105,50,0.28)"></div>
<svg style="position:absolute;left:156px;top:132px" width="465.20000000000005" height="217"><line x1="0" y1="1" x2="465.20000000000005" y2="1" stroke="#000" stroke-width="2" stroke-dasharray="3 3.4"/><line x1="1" y1="0" x2="1" y2="217" stroke="#000" stroke-width="2" stroke-dasharray="3 3.4"/><line x1="0" y1="216" x2="465.20000000000005" y2="216" stroke="#000" stroke-width="2.2" stroke-dasharray="3 3.4"/></svg>
<div style="left:158.00px;top:240.00px;width:462.20px;height:1.30px;background:#5a5438"></div>
<svg style="position:absolute;left:157px;top:133px" width="463.20000000000005" height="215" viewBox="0 0 463.20000000000005 215" shape-rendering="crispEdges"><polygon points="0.0,35.15 1.0,35.15 1.0,35.36 2.0,35.36 2.0,35.34 3.0,35.34 3.0,38.18 4.0,38.18 4.0,36.28 5.0,36.28 5.0,38.52 6.0,38.52 6.0,39.54 7.0,39.54 7.0,39.14 8.0,39.14 8.0,38.94 9.0,38.94 9.0,37.87 10.0,37.87 10.0,39.36 11.0,39.36 11.0,38.94 12.0,38.94 12.0,38.56 13.0,38.56 13.0,38.69 14.0,38.69 14.0,41.71 15.0,41.71 15.0,43.09 16.0,43.09 16.0,43.64 17.0,43.64 17.0,41.93 18.0,41.93 18.0,43.07 19.0,43.07 19.0,44.13 20.0,44.13 20.0,42.41 21.0,42.41 21.0,47.76 22.0,47.76 22.0,52.12 23.0,52.12 23.0,52.00 24.0,52.00 24.0,52.31 25.0,52.31 25.0,52.35 26.0,52.35 26.0,52.40 27.0,52.40 27.0,52.46 28.0,52.46 28.0,52.60 29.0,52.60 29.0,52.68 30.0,52.68 30.0,52.84 31.0,52.84 31.0,52.87 32.0,52.87 32.0,52.93 33.0,52.93 33.0,52.91 34.0,52.91 34.0,52.89 35.0,52.89 35.0,52.94 36.0,52.94 36.0,52.98 37.0,52.98 37.0,52.97 38.0,52.97 38.0,41.36 39.0,41.36 39.0,41.32 40.0,41.32 40.0,42.29 41.0,42.29 41.0,44.54 42.0,44.54 42.0,43.42 43.0,43.42 43.0,44.14 44.0,44.14 44.0,44.51 45.0,44.51 45.0,44.48 46.0,44.48 46.0,46.25 47.0,46.25 47.0,45.61 48.0,45.61 48.0,46.08 49.0,46.08 49.0,47.73 50.0,47.73 50.0,47.13 51.0,47.13 51.0,47.76 52.0,47.76 52.0,48.33 53.0,48.33 53.0,45.26 54.0,45.26 54.0,39.10 55.0,39.10 55.0,39.10 56.0,39.10 56.0,45.26 57.0,45.26 57.0,48.64 58.0,48.64 58.0,48.82 59.0,48.82 59.0,48.83 60.0,48.83 60.0,48.66 61.0,48.66 61.0,48.75 62.0,48.75 62.0,49.34 63.0,49.34 63.0,53.04 64.0,53.04 64.0,53.10 65.0,53.10 65.0,53.06 66.0,53.06 66.0,53.04 67.0,53.04 67.0,53.17 68.0,53.17 68.0,53.17 69.0,53.17 69.0,53.10 70.0,53.10 70.0,53.02 71.0,53.02 71.0,44.78 72.0,44.78 72.0,38.30 73.0,38.30 73.0,44.54 74.0,44.54 74.0,45.36 75.0,45.36 75.0,46.79 76.0,46.79 76.0,46.54 77.0,46.54 77.0,45.79 78.0,45.79 78.0,46.18 79.0,46.18 79.0,45.86 80.0,45.86 80.0,46.89 81.0,46.89 81.0,46.93 82.0,46.93 82.0,46.15 83.0,46.15 83.0,47.50 84.0,47.50 84.0,47.11 85.0,47.11 85.0,47.74 86.0,47.74 86.0,48.35 87.0,48.35 87.0,47.80 88.0,47.80 88.0,47.55 89.0,47.55 89.0,47.90 90.0,47.90 90.0,47.56 91.0,47.56 91.0,47.06 92.0,47.06 92.0,48.51 93.0,48.51 93.0,48.37 94.0,48.37 94.0,47.68 95.0,47.68 95.0,48.69 96.0,48.69 96.0,48.83 97.0,48.83 97.0,49.45 98.0,49.45 98.0,48.96 99.0,48.96 99.0,48.81 100.0,48.81 100.0,48.65 101.0,48.65 101.0,48.38 102.0,48.38 102.0,48.28 103.0,48.28 103.0,49.20 104.0,49.20 104.0,49.60 105.0,49.60 105.0,49.06 106.0,49.06 106.0,48.80 107.0,48.80 107.0,45.00 108.0,45.00 108.0,48.80 109.0,48.80 109.0,49.77 110.0,49.77 110.0,49.52 111.0,49.52 111.0,49.93 112.0,49.93 112.0,49.26 113.0,49.26 113.0,49.45 114.0,49.45 114.0,49.50 115.0,49.50 115.0,49.34 116.0,49.34 116.0,49.25 117.0,49.25 117.0,49.47 118.0,49.47 118.0,49.36 119.0,49.36 119.0,49.42 120.0,49.42 120.0,49.85 121.0,49.85 121.0,49.43 122.0,49.43 122.0,49.35 123.0,49.35 123.0,49.29 124.0,49.29 124.0,51.47 125.0,51.47 125.0,51.47 126.0,51.47 126.0,51.06 127.0,51.06 127.0,50.65 128.0,50.65 128.0,50.50 129.0,50.50 129.0,51.08 130.0,51.08 130.0,51.22 131.0,51.22 131.0,51.15 132.0,51.15 132.0,50.82 133.0,50.82 133.0,50.97 134.0,50.97 134.0,51.47 135.0,51.47 135.0,51.29 136.0,51.29 136.0,51.30 137.0,51.30 137.0,51.23 138.0,51.23 138.0,51.50 139.0,51.50 139.0,51.78 140.0,51.78 140.0,51.45 141.0,51.45 141.0,51.89 142.0,51.89 142.0,51.42 143.0,51.42 143.0,51.44 144.0,51.44 144.0,51.56 145.0,51.56 145.0,51.96 146.0,51.96 146.0,51.95 147.0,51.95 147.0,51.86 148.0,51.86 148.0,51.55 149.0,51.55 149.0,52.07 150.0,52.07 150.0,52.12 151.0,52.12 151.0,52.00 152.0,52.00 152.0,52.20 153.0,52.20 153.0,52.45 154.0,52.45 154.0,52.18 155.0,52.18 155.0,52.43 156.0,52.43 156.0,52.35 157.0,52.35 157.0,52.11 158.0,52.11 158.0,51.99 159.0,51.99 159.0,52.17 160.0,52.17 160.0,52.14 161.0,52.14 161.0,52.09 162.0,52.09 162.0,52.45 163.0,52.45 163.0,52.36 164.0,52.36 164.0,52.23 165.0,52.23 165.0,52.56 166.0,52.56 166.0,52.60 167.0,52.60 167.0,52.59 168.0,52.59 168.0,52.34 169.0,52.34 169.0,52.30 170.0,52.30 170.0,52.24 171.0,52.24 171.0,52.49 172.0,52.49 172.0,52.69 173.0,52.69 173.0,52.67 174.0,52.67 174.0,53.01 175.0,53.01 175.0,52.89 176.0,52.89 176.0,53.29 177.0,53.29 177.0,53.37 178.0,53.37 178.0,53.45 179.0,53.45 179.0,53.39 180.0,53.39 180.0,53.38 181.0,53.38 181.0,53.31 182.0,53.31 182.0,53.31 183.0,53.31 183.0,53.30 184.0,53.30 184.0,53.30 185.0,53.30 185.0,53.33 186.0,53.33 186.0,53.37 187.0,53.37 187.0,53.39 188.0,53.39 188.0,53.41 189.0,53.41 189.0,53.36 190.0,53.36 190.0,53.42 191.0,53.42 191.0,53.48 192.0,53.48 192.0,53.41 193.0,53.41 193.0,53.46 194.0,53.46 194.0,53.35 195.0,53.35 195.0,53.32 196.0,53.32 196.0,53.39 197.0,53.39 197.0,53.35 198.0,53.35 198.0,53.40 199.0,53.40 199.0,53.36 200.0,53.36 200.0,53.38 201.0,53.38 201.0,53.43 202.0,53.43 202.0,53.35 203.0,53.35 203.0,53.39 204.0,53.39 204.0,53.34 205.0,53.34 205.0,53.38 206.0,53.38 206.0,53.30 207.0,53.30 207.0,53.35 208.0,53.35 208.0,53.30 209.0,53.30 209.0,53.34 210.0,53.34 210.0,53.38 211.0,53.38 211.0,53.38 212.0,53.38 212.0,48.81 213.0,48.81 213.0,47.75 214.0,47.75 214.0,47.19 215.0,47.19 215.0,48.51 216.0,48.51 216.0,47.47 217.0,47.47 217.0,43.34 218.0,43.34 218.0,35.90 219.0,35.90 219.0,35.90 220.0,35.90 220.0,43.34 221.0,43.34 221.0,45.08 222.0,45.08 222.0,44.69 223.0,44.69 223.0,47.12 224.0,47.12 224.0,45.38 225.0,45.38 225.0,45.19 226.0,45.19 226.0,46.42 227.0,46.42 227.0,44.99 228.0,44.99 228.0,47.98 229.0,47.98 229.0,48.95 230.0,48.95 230.0,46.78 231.0,46.78 231.0,45.59 232.0,45.59 232.0,47.80 233.0,47.80 233.0,46.76 234.0,46.76 234.0,46.64 235.0,46.64 235.0,46.80 236.0,46.80 236.0,47.65 237.0,47.65 237.0,48.86 238.0,48.86 238.0,47.96 239.0,47.96 239.0,46.80 240.0,46.80 240.0,48.02 241.0,48.02 241.0,46.88 242.0,46.88 242.0,49.02 243.0,49.02 243.0,47.94 244.0,47.94 244.0,48.35 245.0,48.35 245.0,49.14 246.0,49.14 246.0,48.38 247.0,48.38 247.0,48.09 248.0,48.09 248.0,47.71 249.0,47.71 249.0,48.16 250.0,48.16 250.0,47.60 251.0,47.60 251.0,47.19 252.0,47.19 252.0,47.77 253.0,47.77 253.0,48.42 254.0,48.42 254.0,47.96 255.0,47.96 255.0,47.73 256.0,47.73 256.0,49.32 257.0,49.32 257.0,50.27 258.0,50.27 258.0,49.98 259.0,49.98 259.0,48.39 260.0,48.39 260.0,48.90 261.0,48.90 261.0,48.80 262.0,48.80 262.0,49.89 263.0,49.89 263.0,50.08 264.0,50.08 264.0,48.67 265.0,48.67 265.0,48.77 266.0,48.77 266.0,49.49 267.0,49.49 267.0,49.45 268.0,49.45 268.0,48.55 269.0,48.55 269.0,49.09 270.0,49.09 270.0,49.95 271.0,49.95 271.0,50.73 272.0,50.73 272.0,49.27 273.0,49.27 273.0,49.34 274.0,49.34 274.0,45.90 275.0,45.90 275.0,49.34 276.0,49.34 276.0,52.16 277.0,52.16 277.0,52.28 278.0,52.28 278.0,52.29 279.0,52.29 279.0,52.13 280.0,52.13 280.0,51.91 281.0,51.91 281.0,52.36 282.0,52.36 282.0,52.35 283.0,52.35 283.0,51.68 284.0,51.68 284.0,51.96 285.0,51.96 285.0,51.93 286.0,51.93 286.0,51.72 287.0,51.72 287.0,51.73 288.0,51.73 288.0,51.66 289.0,51.66 289.0,51.94 290.0,51.94 290.0,52.26 291.0,52.26 291.0,52.18 292.0,52.18 292.0,52.08 293.0,52.08 293.0,52.56 294.0,52.56 294.0,52.54 295.0,52.54 295.0,52.28 296.0,52.28 296.0,52.53 297.0,52.53 297.0,52.26 298.0,52.26 298.0,52.59 299.0,52.59 299.0,52.67 300.0,52.67 300.0,52.80 301.0,52.80 301.0,52.17 302.0,52.17 302.0,51.90 303.0,51.90 303.0,52.49 304.0,52.49 304.0,52.48 305.0,52.48 305.0,52.76 306.0,52.76 306.0,52.74 307.0,52.74 307.0,52.57 308.0,52.57 308.0,52.62 309.0,52.62 309.0,53.09 310.0,53.09 310.0,53.04 311.0,53.04 311.0,53.13 312.0,53.13 312.0,53.23 313.0,53.23 313.0,53.31 314.0,53.31 314.0,53.18 315.0,53.18 315.0,53.15 316.0,53.15 316.0,53.14 317.0,53.14 317.0,53.26 318.0,53.26 318.0,53.18 319.0,53.18 319.0,53.07 320.0,53.07 320.0,53.03 321.0,53.03 321.0,53.23 322.0,53.23 322.0,53.22 323.0,53.22 323.0,51.38 324.0,51.38 324.0,51.32 325.0,51.32 325.0,50.70 326.0,50.70 326.0,51.18 327.0,51.18 327.0,51.07 328.0,51.07 328.0,51.16 329.0,51.16 329.0,51.44 330.0,51.44 330.0,50.29 331.0,50.29 331.0,50.86 332.0,50.86 332.0,50.20 333.0,50.20 333.0,50.54 334.0,50.54 334.0,50.80 335.0,50.80 335.0,50.82 336.0,50.82 336.0,51.00 337.0,51.00 337.0,51.08 338.0,51.08 338.0,50.56 339.0,50.56 339.0,50.99 340.0,50.99 340.0,50.63 341.0,50.63 341.0,50.77 342.0,50.77 342.0,50.98 343.0,50.98 343.0,50.56 344.0,50.56 344.0,49.94 345.0,49.94 345.0,48.88 346.0,48.88 346.0,47.98 347.0,47.98 347.0,49.68 348.0,49.68 348.0,48.17 349.0,48.17 349.0,48.50 350.0,48.50 350.0,49.44 351.0,49.44 351.0,49.52 352.0,49.52 352.0,48.47 353.0,48.47 353.0,49.71 354.0,49.71 354.0,48.74 355.0,48.74 355.0,49.54 356.0,49.54 356.0,49.36 357.0,49.36 357.0,50.21 358.0,50.21 358.0,50.95 359.0,50.95 359.0,51.19 360.0,51.19 360.0,51.10 361.0,51.10 361.0,51.16 362.0,51.16 362.0,50.23 363.0,50.23 363.0,50.56 364.0,50.56 364.0,50.28 365.0,50.28 365.0,49.60 366.0,49.60 366.0,49.64 367.0,49.64 367.0,49.84 368.0,49.84 368.0,49.72 369.0,49.72 369.0,49.13 370.0,49.13 370.0,50.40 371.0,50.40 371.0,49.30 372.0,49.30 372.0,49.78 373.0,49.78 373.0,49.47 374.0,49.47 374.0,49.72 375.0,49.72 375.0,49.67 376.0,49.67 376.0,50.58 377.0,50.58 377.0,50.47 378.0,50.47 378.0,50.28 379.0,50.28 379.0,50.78 380.0,50.78 380.0,51.12 381.0,51.12 381.0,51.40 382.0,51.40 382.0,51.33 383.0,51.33 383.0,50.19 384.0,50.19 384.0,49.99 385.0,49.99 385.0,49.47 386.0,49.47 386.0,49.54 387.0,49.54 387.0,50.60 388.0,50.60 388.0,50.82 389.0,50.82 389.0,49.65 390.0,49.65 390.0,49.49 391.0,49.49 391.0,49.35 392.0,49.35 392.0,49.03 393.0,49.03 393.0,48.97 394.0,48.97 394.0,49.97 395.0,49.97 395.0,50.45 396.0,50.45 396.0,49.64 397.0,49.64 397.0,49.62 398.0,49.62 398.0,49.73 399.0,49.73 399.0,50.38 400.0,50.38 400.0,50.59 401.0,50.59 401.0,50.98 402.0,50.98 402.0,51.28 403.0,51.28 403.0,51.28 404.0,51.28 404.0,51.12 405.0,51.12 405.0,51.09 406.0,51.09 406.0,50.60 407.0,50.60 407.0,50.32 408.0,50.32 408.0,50.40 409.0,50.40 409.0,50.10 410.0,50.10 410.0,50.51 411.0,50.51 411.0,50.48 412.0,50.48 412.0,50.33 413.0,50.33 413.0,50.48 414.0,50.48 414.0,50.06 415.0,50.06 415.0,50.87 416.0,50.87 416.0,50.04 417.0,50.04 417.0,49.76 418.0,49.76 418.0,49.49 419.0,49.49 419.0,50.14 420.0,50.14 420.0,50.71 421.0,50.71 421.0,50.09 422.0,50.09 422.0,49.69 423.0,49.69 423.0,49.62 424.0,49.62 424.0,50.77 425.0,50.77 425.0,51.20 426.0,51.20 426.0,50.65 427.0,50.65 427.0,51.05 428.0,51.05 428.0,51.24 429.0,51.24 429.0,51.13 430.0,51.13 430.0,50.65 431.0,50.65 431.0,50.28 432.0,50.28 432.0,49.64 433.0,49.64 433.0,49.25 434.0,49.25 434.0,50.29 435.0,50.29 435.0,50.59 436.0,50.59 436.0,50.59 437.0,50.59 437.0,51.00 438.0,51.00 438.0,51.11 439.0,51.11 439.0,50.06 440.0,50.06 440.0,50.46 441.0,50.46 441.0,50.65 442.0,50.65 442.0,50.35 443.0,50.35 443.0,49.81 444.0,49.81 444.0,48.98 445.0,48.98 445.0,45.30 446.0,45.30 446.0,48.98 447.0,48.98 447.0,50.05 448.0,50.05 448.0,50.42 449.0,50.42 449.0,50.26 450.0,50.26 450.0,49.57 451.0,49.57 451.0,49.82 452.0,49.82 452.0,50.43 453.0,50.43 453.0,50.97 454.0,50.97 454.0,50.38 455.0,50.38 455.0,50.32 456.0,50.32 456.0,50.10 457.0,50.10 457.0,51.02 458.0,51.02 458.0,51.44 459.0,51.44 459.0,51.54 460.0,51.54 460.0,51.58 461.0,51.58 461.0,51.05 462.0,51.05 462.0,50.97 463.0,50.97 463.0,57.07 462.0,57.07 462.0,57.50 461.0,57.50 461.0,57.94 460.0,57.94 460.0,58.11 459.0,58.11 459.0,57.77 458.0,57.77 458.0,58.37 457.0,58.37 457.0,58.10 456.0,58.10 456.0,57.78 455.0,57.78 455.0,57.19 454.0,57.19 454.0,57.71 453.0,57.71 453.0,58.19 452.0,58.19 452.0,58.38 451.0,58.38 451.0,57.61 450.0,57.61 450.0,57.89 449.0,57.89 449.0,57.89 448.0,57.89 448.0,58.61 447.0,58.61 447.0,58.82 446.0,58.82 446.0,61.70 445.0,61.70 445.0,58.82 444.0,58.82 444.0,57.29 443.0,57.29 443.0,57.55 442.0,57.55 442.0,58.15 441.0,58.15 441.0,57.24 440.0,57.24 440.0,57.84 439.0,57.84 439.0,58.41 438.0,58.41 438.0,58.17 437.0,58.17 437.0,58.56 436.0,58.56 436.0,58.16 435.0,58.16 435.0,57.71 434.0,57.71 434.0,58.03 433.0,58.03 433.0,57.86 432.0,57.86 432.0,57.75 431.0,57.75 431.0,57.94 430.0,57.94 430.0,57.63 429.0,57.63 429.0,58.10 428.0,58.10 428.0,58.05 427.0,58.05 427.0,58.08 426.0,58.08 426.0,57.16 425.0,57.16 425.0,57.40 424.0,57.40 424.0,57.49 423.0,57.49 423.0,58.18 422.0,58.18 422.0,57.85 421.0,57.85 421.0,58.05 420.0,58.05 420.0,57.99 419.0,57.99 419.0,58.22 418.0,58.22 418.0,58.11 417.0,58.11 417.0,58.54 416.0,58.54 416.0,59.03 415.0,59.03 415.0,58.86 414.0,58.86 414.0,58.47 413.0,58.47 413.0,57.58 412.0,57.58 412.0,57.06 411.0,57.06 411.0,57.44 410.0,57.44 410.0,57.85 409.0,57.85 409.0,58.11 408.0,58.11 408.0,58.31 407.0,58.31 407.0,57.59 406.0,57.59 406.0,57.76 405.0,57.76 405.0,58.19 404.0,58.19 404.0,58.10 403.0,58.10 403.0,58.79 402.0,58.79 402.0,58.22 401.0,58.22 401.0,57.36 400.0,57.36 400.0,57.40 399.0,57.40 399.0,57.15 398.0,57.15 398.0,57.30 397.0,57.30 397.0,57.56 396.0,57.56 396.0,57.83 395.0,57.83 395.0,57.38 394.0,57.38 394.0,57.27 393.0,57.27 393.0,57.89 392.0,57.89 392.0,58.29 391.0,58.29 391.0,57.90 390.0,57.90 390.0,57.15 389.0,57.15 389.0,57.61 388.0,57.61 388.0,57.29 387.0,57.29 387.0,57.82 386.0,57.82 386.0,58.79 385.0,58.79 385.0,58.03 384.0,58.03 384.0,57.82 383.0,57.82 383.0,58.14 382.0,58.14 382.0,57.27 381.0,57.27 381.0,57.14 380.0,57.14 380.0,57.49 379.0,57.49 379.0,57.09 378.0,57.09 378.0,57.20 377.0,57.20 377.0,57.52 376.0,57.52 376.0,58.25 375.0,58.25 375.0,58.54 374.0,58.54 374.0,58.34 373.0,58.34 373.0,57.60 372.0,57.60 372.0,57.31 371.0,57.31 371.0,57.75 370.0,57.75 370.0,58.87 369.0,58.87 369.0,58.10 368.0,58.10 368.0,58.63 367.0,58.63 367.0,57.76 366.0,57.76 366.0,58.45 365.0,58.45 365.0,57.94 364.0,57.94 364.0,58.25 363.0,58.25 363.0,57.66 362.0,57.66 362.0,58.16 361.0,58.16 361.0,58.41 360.0,58.41 360.0,57.53 359.0,57.53 359.0,57.20 358.0,57.20 358.0,57.62 357.0,57.62 357.0,58.30 356.0,58.30 356.0,58.57 355.0,58.57 355.0,58.95 354.0,58.95 354.0,58.53 353.0,58.53 353.0,57.95 352.0,57.95 352.0,58.27 351.0,58.27 351.0,57.58 350.0,57.58 350.0,57.69 349.0,57.69 349.0,57.89 348.0,57.89 348.0,58.62 347.0,58.62 347.0,58.61 346.0,58.61 346.0,59.16 345.0,59.16 345.0,58.29 344.0,58.29 344.0,58.29 343.0,58.29 343.0,57.82 342.0,57.82 342.0,57.50 341.0,57.50 341.0,57.55 340.0,57.55 340.0,57.40 339.0,57.40 339.0,57.24 338.0,57.24 338.0,57.58 337.0,57.58 337.0,57.25 336.0,57.25 336.0,57.57 335.0,57.57 335.0,57.53 334.0,57.53 334.0,57.40 333.0,57.40 333.0,57.39 332.0,57.39 332.0,57.72 331.0,57.72 331.0,57.36 330.0,57.36 330.0,57.57 329.0,57.57 329.0,57.21 328.0,57.21 328.0,57.18 327.0,57.18 327.0,57.01 326.0,57.01 326.0,57.09 325.0,57.09 325.0,57.16 324.0,57.16 324.0,56.94 323.0,56.94 323.0,55.47 322.0,55.47 322.0,55.58 321.0,55.58 321.0,55.41 320.0,55.41 320.0,55.48 319.0,55.48 319.0,55.44 318.0,55.44 318.0,55.54 317.0,55.54 317.0,55.47 316.0,55.47 316.0,55.45 315.0,55.45 315.0,55.50 314.0,55.50 314.0,55.49 313.0,55.49 313.0,55.58 312.0,55.58 312.0,55.65 311.0,55.65 311.0,55.57 310.0,55.57 310.0,55.51 309.0,55.51 309.0,56.01 308.0,56.01 308.0,56.44 307.0,56.44 307.0,56.17 306.0,56.17 306.0,56.42 305.0,56.42 305.0,56.01 304.0,56.01 304.0,55.96 303.0,55.96 303.0,55.94 302.0,55.94 302.0,56.02 301.0,56.02 301.0,56.37 300.0,56.37 300.0,56.56 299.0,56.56 299.0,56.56 298.0,56.56 298.0,56.36 297.0,56.36 297.0,56.32 296.0,56.32 296.0,56.53 295.0,56.53 295.0,56.64 294.0,56.64 294.0,56.48 293.0,56.48 293.0,56.55 292.0,56.55 292.0,56.11 291.0,56.11 291.0,56.51 290.0,56.51 290.0,56.58 289.0,56.58 289.0,56.26 288.0,56.26 288.0,56.58 287.0,56.58 287.0,56.62 286.0,56.62 286.0,56.72 285.0,56.72 285.0,56.70 284.0,56.70 284.0,56.13 283.0,56.13 283.0,56.52 282.0,56.52 282.0,56.35 281.0,56.35 281.0,56.46 280.0,56.46 280.0,56.68 279.0,56.68 279.0,56.70 278.0,56.70 278.0,56.50 277.0,56.50 277.0,56.72 276.0,56.72 276.0,58.70 275.0,58.70 275.0,61.50 274.0,61.50 274.0,58.82 273.0,58.82 273.0,58.81 272.0,58.81 272.0,57.77 271.0,57.77 271.0,58.42 270.0,58.42 270.0,57.66 269.0,57.66 269.0,57.83 268.0,57.83 268.0,58.06 267.0,58.06 267.0,58.49 266.0,58.49 266.0,58.15 265.0,58.15 265.0,59.43 264.0,59.43 264.0,58.80 263.0,58.80 263.0,59.60 262.0,59.60 262.0,60.25 261.0,60.25 261.0,60.07 260.0,60.07 260.0,60.01 259.0,60.01 259.0,59.09 258.0,59.09 258.0,59.58 257.0,59.58 257.0,59.20 256.0,59.20 256.0,59.49 255.0,59.49 255.0,60.79 254.0,60.79 254.0,60.78 253.0,60.78 253.0,60.67 252.0,60.67 252.0,60.34 251.0,60.34 251.0,59.73 250.0,59.73 250.0,58.78 249.0,58.78 249.0,58.35 248.0,58.35 248.0,58.84 247.0,58.84 247.0,58.81 246.0,58.81 246.0,59.61 245.0,59.61 245.0,59.64 244.0,59.64 244.0,58.93 243.0,58.93 243.0,58.91 242.0,58.91 242.0,59.63 241.0,59.63 241.0,61.17 240.0,61.17 240.0,60.31 239.0,60.31 239.0,60.00 238.0,60.00 238.0,61.34 237.0,61.34 237.0,60.35 236.0,60.35 236.0,60.73 235.0,60.73 235.0,60.05 234.0,60.05 234.0,61.70 233.0,61.70 233.0,61.19 232.0,61.19 232.0,60.72 231.0,60.72 231.0,60.68 230.0,60.68 230.0,60.09 229.0,60.09 229.0,60.29 228.0,60.29 228.0,61.00 227.0,61.00 227.0,59.45 226.0,59.45 226.0,61.47 225.0,61.47 225.0,60.16 224.0,60.16 224.0,59.82 223.0,59.82 223.0,61.25 222.0,61.25 222.0,60.99 221.0,60.99 221.0,64.88 220.0,64.88 220.0,71.80 219.0,71.80 219.0,71.80 218.0,71.80 218.0,64.88 217.0,64.88 217.0,60.28 216.0,60.28 216.0,60.96 215.0,60.96 215.0,59.63 214.0,59.63 214.0,60.00 213.0,60.00 213.0,59.55 212.0,59.55 212.0,55.43 211.0,55.43 211.0,55.38 210.0,55.38 210.0,55.43 209.0,55.43 209.0,55.35 208.0,55.35 208.0,55.39 207.0,55.39 207.0,55.41 206.0,55.41 206.0,55.40 205.0,55.40 205.0,55.45 204.0,55.45 204.0,55.41 203.0,55.41 203.0,55.47 202.0,55.47 202.0,55.38 201.0,55.38 201.0,55.44 200.0,55.44 200.0,55.40 199.0,55.40 199.0,55.47 198.0,55.47 198.0,55.50 197.0,55.50 197.0,55.49 196.0,55.49 196.0,55.46 195.0,55.46 195.0,55.41 194.0,55.41 194.0,55.41 193.0,55.41 193.0,55.42 192.0,55.42 192.0,55.37 191.0,55.37 191.0,55.45 190.0,55.45 190.0,55.45 189.0,55.45 189.0,55.45 188.0,55.45 188.0,55.36 187.0,55.36 187.0,55.47 186.0,55.47 186.0,55.47 185.0,55.47 185.0,55.48 184.0,55.48 184.0,55.45 183.0,55.45 183.0,55.45 182.0,55.45 182.0,55.44 181.0,55.44 181.0,55.43 180.0,55.43 180.0,55.41 179.0,55.41 179.0,55.41 178.0,55.41 178.0,55.44 177.0,55.44 177.0,55.52 176.0,55.52 176.0,55.68 175.0,55.68 175.0,55.74 174.0,55.74 174.0,55.96 173.0,55.96 173.0,56.09 172.0,56.09 172.0,56.09 171.0,56.09 171.0,56.23 170.0,56.23 170.0,56.08 169.0,56.08 169.0,56.21 168.0,56.21 168.0,55.90 167.0,55.90 167.0,55.97 166.0,55.97 166.0,56.07 165.0,56.07 165.0,56.10 164.0,56.10 164.0,56.39 163.0,56.39 163.0,56.59 162.0,56.59 162.0,56.60 161.0,56.60 161.0,56.54 160.0,56.54 160.0,56.29 159.0,56.29 159.0,56.51 158.0,56.51 158.0,56.56 157.0,56.56 157.0,56.40 156.0,56.40 156.0,56.41 155.0,56.41 155.0,56.18 154.0,56.18 154.0,56.36 153.0,56.36 153.0,56.81 152.0,56.81 152.0,56.62 151.0,56.62 151.0,56.57 150.0,56.57 150.0,56.92 149.0,56.92 149.0,56.84 148.0,56.84 148.0,56.55 147.0,56.55 147.0,56.57 146.0,56.57 146.0,56.24 145.0,56.24 145.0,56.43 144.0,56.43 144.0,56.72 143.0,56.72 143.0,56.77 142.0,56.77 142.0,56.99 141.0,56.99 141.0,56.58 140.0,56.58 140.0,56.95 139.0,56.95 139.0,56.57 138.0,56.57 138.0,57.06 137.0,57.06 137.0,56.99 136.0,56.99 136.0,56.75 135.0,56.75 135.0,57.21 134.0,57.21 134.0,57.35 133.0,57.35 133.0,57.21 132.0,57.21 132.0,57.03 131.0,57.03 131.0,56.77 130.0,56.77 130.0,57.02 129.0,57.02 129.0,56.87 128.0,56.87 128.0,57.52 127.0,57.52 127.0,57.52 126.0,57.52 126.0,57.60 125.0,57.60 125.0,57.16 124.0,57.16 124.0,58.02 123.0,58.02 123.0,58.71 122.0,58.71 122.0,58.51 121.0,58.51 121.0,58.79 120.0,58.79 120.0,58.45 119.0,58.45 119.0,58.45 118.0,58.45 118.0,57.78 117.0,57.78 117.0,58.51 116.0,58.51 116.0,58.77 115.0,58.77 115.0,58.44 114.0,58.44 114.0,58.50 113.0,58.50 113.0,57.90 112.0,57.90 112.0,58.22 111.0,58.22 111.0,58.50 110.0,58.50 110.0,58.30 109.0,58.30 109.0,59.16 108.0,59.16 108.0,61.50 107.0,61.50 107.0,58.97 106.0,58.97 106.0,58.86 105.0,58.86 105.0,59.19 104.0,59.19 104.0,59.21 103.0,59.21 103.0,58.58 102.0,58.58 102.0,58.63 101.0,58.63 101.0,58.94 100.0,58.94 100.0,58.66 99.0,58.66 99.0,59.20 98.0,59.20 98.0,59.32 97.0,59.32 97.0,59.28 96.0,59.28 96.0,58.74 95.0,58.74 95.0,58.81 94.0,58.81 94.0,59.39 93.0,59.39 93.0,59.74 92.0,59.74 92.0,60.00 91.0,60.00 91.0,58.92 90.0,58.92 90.0,59.88 89.0,59.88 89.0,58.75 88.0,58.75 88.0,59.77 87.0,59.77 87.0,60.73 86.0,60.73 86.0,60.15 85.0,60.15 85.0,60.51 84.0,60.51 84.0,60.62 83.0,60.62 83.0,60.76 82.0,60.76 82.0,61.11 81.0,61.11 81.0,60.85 80.0,60.85 80.0,59.88 79.0,59.88 79.0,61.47 78.0,61.47 78.0,61.12 77.0,61.12 77.0,62.10 76.0,62.10 76.0,62.19 75.0,62.19 75.0,61.84 74.0,61.84 74.0,63.86 73.0,63.86 73.0,70.10 72.0,70.10 72.0,63.86 71.0,63.86 71.0,55.59 70.0,55.59 70.0,55.68 69.0,55.68 69.0,55.62 68.0,55.62 68.0,55.63 67.0,55.63 67.0,55.60 66.0,55.60 66.0,55.64 65.0,55.64 65.0,55.56 64.0,55.56 64.0,55.59 63.0,55.59 63.0,58.62 62.0,58.62 62.0,58.20 61.0,58.20 61.0,58.89 60.0,58.89 60.0,59.02 59.0,59.02 59.0,59.09 58.0,59.09 58.0,59.57 57.0,59.57 57.0,62.30 56.0,62.30 56.0,67.50 55.0,67.50 55.0,67.50 54.0,67.50 54.0,62.30 53.0,62.30 53.0,59.24 52.0,59.24 52.0,59.43 51.0,59.43 51.0,60.88 50.0,60.88 50.0,61.42 49.0,61.42 49.0,61.89 48.0,61.89 48.0,61.81 47.0,61.81 47.0,62.50 46.0,62.50 46.0,62.70 45.0,62.70 45.0,63.71 44.0,63.71 44.0,63.93 43.0,63.93 43.0,64.26 42.0,64.26 42.0,64.40 41.0,64.40 41.0,64.92 40.0,64.92 40.0,65.05 39.0,65.05 39.0,63.34 38.0,63.34 38.0,55.68 37.0,55.68 37.0,55.66 36.0,55.66 36.0,55.68 35.0,55.68 35.0,55.78 34.0,55.78 34.0,55.88 33.0,55.88 33.0,55.90 32.0,55.90 32.0,55.94 31.0,55.94 31.0,55.97 30.0,55.97 30.0,55.98 29.0,55.98 29.0,56.08 28.0,56.08 28.0,56.19 27.0,56.19 27.0,56.30 26.0,56.30 26.0,56.35 25.0,56.35 25.0,56.89 24.0,56.89 24.0,56.99 23.0,56.99 23.0,57.34 22.0,57.34 22.0,61.66 21.0,61.66 21.0,67.05 20.0,67.05 20.0,66.39 19.0,66.39 19.0,66.86 18.0,66.86 18.0,65.49 17.0,65.49 17.0,66.51 16.0,66.51 16.0,67.61 15.0,67.61 15.0,68.83 14.0,68.83 14.0,68.88 13.0,68.88 13.0,69.75 12.0,69.75 12.0,68.75 11.0,68.75 11.0,69.21 10.0,69.21 10.0,71.69 9.0,71.69 9.0,70.89 8.0,70.89 8.0,70.69 7.0,70.69 7.0,68.65 6.0,68.65 6.0,68.81 5.0,68.81 5.0,74.39 4.0,74.39 4.0,74.30 3.0,74.30 3.0,74.38 2.0,74.38 2.0,73.96 1.0,73.96 1.0,74.03 0.0,74.03" fill="#8d909c"/><polygon points="0.0,41.06 1.0,41.06 1.0,43.88 2.0,43.88 2.0,44.42 3.0,44.42 3.0,42.70 4.0,42.70 4.0,43.11 5.0,43.11 5.0,43.78 6.0,43.78 6.0,45.55 7.0,45.55 7.0,44.34 8.0,44.34 8.0,44.79 9.0,44.79 9.0,43.98 10.0,43.98 10.0,45.77 11.0,45.77 11.0,44.55 12.0,44.55 12.0,47.01 13.0,47.01 13.0,44.80 14.0,44.80 14.0,45.58 15.0,45.58 15.0,45.44 16.0,45.44 16.0,47.68 17.0,47.68 17.0,46.91 18.0,46.91 18.0,48.08 19.0,48.08 19.0,48.15 20.0,48.15 20.0,48.21 21.0,48.21 21.0,49.89 22.0,49.89 22.0,52.77 23.0,52.77 23.0,52.77 24.0,52.77 24.0,52.84 25.0,52.84 25.0,52.51 26.0,52.51 26.0,52.94 27.0,52.94 27.0,52.95 28.0,52.95 28.0,53.01 29.0,53.01 29.0,52.94 30.0,52.94 30.0,53.07 31.0,53.07 31.0,52.95 32.0,52.95 32.0,53.22 33.0,53.22 33.0,53.03 34.0,53.03 34.0,53.31 35.0,53.31 35.0,53.28 36.0,53.28 36.0,53.25 37.0,53.25 37.0,53.17 38.0,53.17 38.0,49.03 39.0,49.03 39.0,49.13 40.0,49.13 40.0,48.71 41.0,48.71 41.0,48.10 42.0,48.10 42.0,48.14 43.0,48.14 43.0,48.09 44.0,48.09 44.0,48.30 45.0,48.30 45.0,48.89 46.0,48.89 46.0,48.37 47.0,48.37 47.0,48.91 48.0,48.91 48.0,50.02 49.0,50.02 49.0,49.55 50.0,49.55 50.0,49.49 51.0,49.49 51.0,50.05 52.0,50.05 52.0,49.36 53.0,49.36 53.0,50.26 54.0,50.26 54.0,49.77 55.0,49.77 55.0,50.18 56.0,50.18 56.0,50.01 57.0,50.01 57.0,50.80 58.0,50.80 58.0,50.99 59.0,50.99 59.0,50.99 60.0,50.99 60.0,51.36 61.0,51.36 61.0,50.84 62.0,50.84 62.0,51.64 63.0,51.64 63.0,53.13 64.0,53.13 64.0,53.20 65.0,53.20 65.0,53.14 66.0,53.14 66.0,53.26 67.0,53.26 67.0,53.17 68.0,53.17 68.0,53.18 69.0,53.18 69.0,53.29 70.0,53.29 70.0,53.09 71.0,53.09 71.0,53.21 72.0,53.21 72.0,49.22 73.0,49.22 73.0,49.59 74.0,49.59 74.0,49.67 75.0,49.67 75.0,49.28 76.0,49.28 76.0,50.22 77.0,50.22 77.0,50.58 78.0,50.58 78.0,50.12 79.0,50.12 79.0,49.78 80.0,49.78 80.0,50.67 81.0,50.67 81.0,49.86 82.0,49.86 82.0,49.80 83.0,49.80 83.0,50.63 84.0,50.63 84.0,49.99 85.0,49.99 85.0,50.02 86.0,50.02 86.0,49.90 87.0,49.90 87.0,50.43 88.0,50.43 88.0,49.94 89.0,49.94 89.0,50.44 90.0,50.44 90.0,50.49 91.0,50.49 91.0,50.82 92.0,50.82 92.0,50.22 93.0,50.22 93.0,50.95 94.0,50.95 94.0,50.31 95.0,50.31 95.0,50.44 96.0,50.44 96.0,51.11 97.0,51.11 97.0,50.97 98.0,50.97 98.0,50.85 99.0,50.85 99.0,51.06 100.0,51.06 100.0,50.37 101.0,50.37 101.0,50.52 102.0,50.52 102.0,51.00 103.0,51.00 103.0,50.41 104.0,50.41 104.0,51.10 105.0,51.10 105.0,50.56 106.0,50.56 106.0,51.40 107.0,51.40 107.0,50.42 108.0,50.42 108.0,50.93 109.0,50.93 109.0,51.36 110.0,51.36 110.0,50.90 111.0,50.90 111.0,50.65 112.0,50.65 112.0,51.46 113.0,51.46 113.0,51.22 114.0,51.22 114.0,50.96 115.0,50.96 115.0,51.40 116.0,51.40 116.0,51.41 117.0,51.41 117.0,50.74 118.0,50.74 118.0,51.01 119.0,51.01 119.0,50.67 120.0,50.67 120.0,50.90 121.0,50.90 121.0,50.75 122.0,50.75 122.0,50.88 123.0,50.88 123.0,51.30 124.0,51.30 124.0,52.11 125.0,52.11 125.0,52.10 126.0,52.10 126.0,52.20 127.0,52.20 127.0,52.11 128.0,52.11 128.0,52.18 129.0,52.18 129.0,52.56 130.0,52.56 130.0,52.44 131.0,52.44 131.0,51.99 132.0,51.99 132.0,52.11 133.0,52.11 133.0,52.61 134.0,52.61 134.0,52.54 135.0,52.54 135.0,52.07 136.0,52.07 136.0,52.44 137.0,52.44 137.0,52.51 138.0,52.51 138.0,52.54 139.0,52.54 139.0,52.47 140.0,52.47 140.0,52.12 141.0,52.12 141.0,52.47 142.0,52.47 142.0,52.43 143.0,52.43 143.0,52.17 144.0,52.17 144.0,52.39 145.0,52.39 145.0,52.46 146.0,52.46 146.0,52.52 147.0,52.52 147.0,52.34 148.0,52.34 148.0,52.38 149.0,52.38 149.0,52.37 150.0,52.37 150.0,52.44 151.0,52.44 151.0,52.42 152.0,52.42 152.0,52.34 153.0,52.34 153.0,52.72 154.0,52.72 154.0,52.58 155.0,52.58 155.0,52.60 156.0,52.60 156.0,52.80 157.0,52.80 157.0,52.89 158.0,52.89 158.0,52.53 159.0,52.53 159.0,52.53 160.0,52.53 160.0,52.80 161.0,52.80 161.0,52.77 162.0,52.77 162.0,52.96 163.0,52.96 163.0,52.67 164.0,52.67 164.0,52.92 165.0,52.92 165.0,52.69 166.0,52.69 166.0,52.89 167.0,52.89 167.0,52.73 168.0,52.73 168.0,52.65 169.0,52.65 169.0,52.95 170.0,52.95 170.0,53.00 171.0,53.00 171.0,52.95 172.0,52.95 172.0,52.78 173.0,52.78 173.0,53.09 174.0,53.09 174.0,53.17 175.0,53.17 175.0,52.89 176.0,52.89 176.0,53.31 177.0,53.31 177.0,53.37 178.0,53.37 178.0,53.55 179.0,53.55 179.0,53.53 180.0,53.53 180.0,53.48 181.0,53.48 181.0,53.45 182.0,53.45 182.0,53.32 183.0,53.32 183.0,53.34 184.0,53.34 184.0,53.30 185.0,53.30 185.0,53.35 186.0,53.35 186.0,53.37 187.0,53.37 187.0,53.54 188.0,53.54 188.0,53.58 189.0,53.58 189.0,53.36 190.0,53.36 190.0,53.42 191.0,53.42 191.0,53.54 192.0,53.54 192.0,53.41 193.0,53.41 193.0,53.54 194.0,53.54 194.0,53.35 195.0,53.35 195.0,53.32 196.0,53.32 196.0,53.45 197.0,53.45 197.0,53.35 198.0,53.35 198.0,53.51 199.0,53.51 199.0,53.59 200.0,53.59 200.0,53.38 201.0,53.38 201.0,53.50 202.0,53.50 202.0,53.40 203.0,53.40 203.0,53.55 204.0,53.55 204.0,53.34 205.0,53.34 205.0,53.38 206.0,53.38 206.0,53.30 207.0,53.30 207.0,53.35 208.0,53.35 208.0,53.34 209.0,53.34 209.0,53.55 210.0,53.55 210.0,53.57 211.0,53.57 211.0,53.49 212.0,53.49 212.0,49.33 213.0,49.33 213.0,50.12 214.0,50.12 214.0,49.41 215.0,49.41 215.0,49.19 216.0,49.19 216.0,49.90 217.0,49.90 217.0,49.98 218.0,49.98 218.0,49.60 219.0,49.60 219.0,49.65 220.0,49.65 220.0,50.46 221.0,50.46 221.0,50.44 222.0,50.44 222.0,50.60 223.0,50.60 223.0,50.22 224.0,50.22 224.0,50.13 225.0,50.13 225.0,50.32 226.0,50.32 226.0,50.34 227.0,50.34 227.0,50.06 228.0,50.06 228.0,50.49 229.0,50.49 229.0,50.32 230.0,50.32 230.0,50.78 231.0,50.78 231.0,50.59 232.0,50.59 232.0,49.87 233.0,49.87 233.0,50.84 234.0,50.84 234.0,51.00 235.0,51.00 235.0,50.74 236.0,50.74 236.0,51.00 237.0,51.00 237.0,50.55 238.0,50.55 238.0,50.16 239.0,50.16 239.0,51.08 240.0,51.08 240.0,50.97 241.0,50.97 241.0,50.66 242.0,50.66 242.0,50.21 243.0,50.21 243.0,50.58 244.0,50.58 244.0,50.47 245.0,50.47 245.0,51.21 246.0,51.21 246.0,50.84 247.0,50.84 247.0,50.74 248.0,50.74 248.0,50.43 249.0,50.43 249.0,50.81 250.0,50.81 250.0,50.99 251.0,50.99 251.0,51.09 252.0,51.09 252.0,51.00 253.0,51.00 253.0,51.23 254.0,51.23 254.0,50.84 255.0,50.84 255.0,51.00 256.0,51.00 256.0,51.11 257.0,51.11 257.0,51.10 258.0,51.10 258.0,51.41 259.0,51.41 259.0,51.01 260.0,51.01 260.0,51.46 261.0,51.46 261.0,51.59 262.0,51.59 262.0,50.80 263.0,50.80 263.0,51.41 264.0,51.41 264.0,51.36 265.0,51.36 265.0,51.72 266.0,51.72 266.0,50.90 267.0,50.90 267.0,51.51 268.0,51.51 268.0,51.03 269.0,51.03 269.0,51.01 270.0,51.01 270.0,51.66 271.0,51.66 271.0,51.20 272.0,51.20 272.0,51.23 273.0,51.23 273.0,51.81 274.0,51.81 274.0,52.31 275.0,52.31 275.0,52.69 276.0,52.69 276.0,52.59 277.0,52.59 277.0,52.57 278.0,52.57 278.0,53.00 279.0,53.00 279.0,52.78 280.0,52.78 280.0,52.93 281.0,52.93 281.0,52.68 282.0,52.68 282.0,52.97 283.0,52.97 283.0,52.84 284.0,52.84 284.0,52.83 285.0,52.83 285.0,52.90 286.0,52.90 286.0,52.84 287.0,52.84 287.0,52.63 288.0,52.63 288.0,52.80 289.0,52.80 289.0,52.72 290.0,52.72 290.0,53.00 291.0,53.00 291.0,52.82 292.0,52.82 292.0,53.03 293.0,53.03 293.0,52.91 294.0,52.91 294.0,53.09 295.0,53.09 295.0,52.75 296.0,52.75 296.0,53.11 297.0,53.11 297.0,53.01 298.0,53.01 298.0,53.06 299.0,53.06 299.0,52.76 300.0,52.76 300.0,52.98 301.0,52.98 301.0,52.93 302.0,52.93 302.0,52.95 303.0,52.95 303.0,52.76 304.0,52.76 304.0,52.98 305.0,52.98 305.0,52.83 306.0,52.83 306.0,52.93 307.0,52.93 307.0,53.02 308.0,53.02 308.0,53.34 309.0,53.34 309.0,53.40 310.0,53.40 310.0,53.22 311.0,53.22 311.0,53.39 312.0,53.39 312.0,53.45 313.0,53.45 313.0,53.44 314.0,53.44 314.0,53.18 315.0,53.18 315.0,53.39 316.0,53.39 316.0,53.42 317.0,53.42 317.0,53.38 318.0,53.38 318.0,53.39 319.0,53.39 319.0,53.26 320.0,53.26 320.0,53.41 321.0,53.41 321.0,53.41 322.0,53.41 322.0,53.38 323.0,53.38 323.0,51.62 324.0,51.62 324.0,51.63 325.0,51.63 325.0,51.45 326.0,51.45 326.0,51.79 327.0,51.79 327.0,51.27 328.0,51.27 328.0,51.79 329.0,51.79 329.0,51.46 330.0,51.46 330.0,51.34 331.0,51.34 331.0,51.31 332.0,51.31 332.0,51.31 333.0,51.31 333.0,51.79 334.0,51.79 334.0,51.57 335.0,51.57 335.0,51.64 336.0,51.64 336.0,51.45 337.0,51.45 337.0,51.08 338.0,51.08 338.0,51.35 339.0,51.35 339.0,51.64 340.0,51.64 340.0,51.35 341.0,51.35 341.0,50.77 342.0,50.77 342.0,51.43 343.0,51.43 343.0,51.23 344.0,51.23 344.0,50.93 345.0,50.93 345.0,51.28 346.0,51.28 346.0,50.68 347.0,50.68 347.0,51.31 348.0,51.31 348.0,51.45 349.0,51.45 349.0,51.66 350.0,51.66 350.0,51.21 351.0,51.21 351.0,51.18 352.0,51.18 352.0,51.41 353.0,51.41 353.0,51.11 354.0,51.11 354.0,51.64 355.0,51.64 355.0,51.47 356.0,51.47 356.0,51.62 357.0,51.62 357.0,51.40 358.0,51.40 358.0,51.79 359.0,51.79 359.0,51.19 360.0,51.19 360.0,51.10 361.0,51.10 361.0,51.17 362.0,51.17 362.0,51.24 363.0,51.24 363.0,51.13 364.0,51.13 364.0,51.26 365.0,51.26 365.0,51.78 366.0,51.78 366.0,51.72 367.0,51.72 367.0,51.03 368.0,51.03 368.0,51.33 369.0,51.33 369.0,51.85 370.0,51.85 370.0,51.64 371.0,51.64 371.0,51.60 372.0,51.60 372.0,51.57 373.0,51.57 373.0,51.65 374.0,51.65 374.0,51.03 375.0,51.03 375.0,51.19 376.0,51.19 376.0,51.08 377.0,51.08 377.0,51.62 378.0,51.62 378.0,51.35 379.0,51.35 379.0,51.59 380.0,51.59 380.0,51.12 381.0,51.12 381.0,51.49 382.0,51.49 382.0,51.49 383.0,51.49 383.0,51.86 384.0,51.86 384.0,51.67 385.0,51.67 385.0,51.53 386.0,51.53 386.0,51.90 387.0,51.90 387.0,51.61 388.0,51.61 388.0,51.91 389.0,51.91 389.0,51.46 390.0,51.46 390.0,51.58 391.0,51.58 391.0,51.06 392.0,51.06 392.0,51.31 393.0,51.31 393.0,51.43 394.0,51.43 394.0,51.36 395.0,51.36 395.0,51.62 396.0,51.62 396.0,51.85 397.0,51.85 397.0,51.29 398.0,51.29 398.0,51.85 399.0,51.85 399.0,51.93 400.0,51.93 400.0,51.47 401.0,51.47 401.0,51.66 402.0,51.66 402.0,51.57 403.0,51.57 403.0,51.33 404.0,51.33 404.0,51.12 405.0,51.12 405.0,51.09 406.0,51.09 406.0,51.39 407.0,51.39 407.0,51.21 408.0,51.21 408.0,51.86 409.0,51.86 409.0,51.38 410.0,51.38 410.0,51.44 411.0,51.44 411.0,51.42 412.0,51.42 412.0,51.15 413.0,51.15 413.0,51.32 414.0,51.32 414.0,51.62 415.0,51.62 415.0,51.54 416.0,51.54 416.0,51.16 417.0,51.16 417.0,51.11 418.0,51.11 418.0,51.75 419.0,51.75 419.0,51.22 420.0,51.22 420.0,51.91 421.0,51.91 421.0,51.77 422.0,51.77 422.0,51.50 423.0,51.50 423.0,51.66 424.0,51.66 424.0,51.24 425.0,51.24 425.0,51.65 426.0,51.65 426.0,51.92 427.0,51.92 427.0,51.23 428.0,51.23 428.0,51.62 429.0,51.62 429.0,51.45 430.0,51.45 430.0,51.83 431.0,51.83 431.0,51.88 432.0,51.88 432.0,51.69 433.0,51.69 433.0,51.36 434.0,51.36 434.0,51.87 435.0,51.87 435.0,51.65 436.0,51.65 436.0,51.70 437.0,51.70 437.0,51.76 438.0,51.76 438.0,51.42 439.0,51.42 439.0,51.37 440.0,51.37 440.0,51.65 441.0,51.65 441.0,51.76 442.0,51.76 442.0,51.66 443.0,51.66 443.0,51.65 444.0,51.65 444.0,51.51 445.0,51.51 445.0,51.94 446.0,51.94 446.0,51.45 447.0,51.45 447.0,52.00 448.0,52.00 448.0,51.62 449.0,51.62 449.0,51.20 450.0,51.20 450.0,51.32 451.0,51.32 451.0,51.97 452.0,51.97 452.0,51.84 453.0,51.84 453.0,51.90 454.0,51.90 454.0,51.89 455.0,51.89 455.0,51.81 456.0,51.81 456.0,51.93 457.0,51.93 457.0,51.24 458.0,51.24 458.0,51.58 459.0,51.58 459.0,51.78 460.0,51.78 460.0,51.93 461.0,51.93 461.0,51.38 462.0,51.38 462.0,51.86 463.0,51.86 463.0,56.77 462.0,56.77 462.0,56.64 461.0,56.64 461.0,56.53 460.0,56.53 460.0,56.81 459.0,56.81 459.0,56.83 458.0,56.83 458.0,57.08 457.0,57.08 457.0,56.79 456.0,56.79 456.0,57.03 455.0,57.03 455.0,56.92 454.0,56.92 454.0,56.75 453.0,56.75 453.0,57.15 452.0,57.15 452.0,56.80 451.0,56.80 451.0,56.92 450.0,56.92 450.0,57.15 449.0,57.15 449.0,56.70 448.0,56.70 448.0,56.92 447.0,56.92 447.0,56.72 446.0,56.72 446.0,56.74 445.0,56.74 445.0,56.86 444.0,56.86 444.0,56.72 443.0,56.72 443.0,56.58 442.0,56.58 442.0,56.97 441.0,56.97 441.0,56.69 440.0,56.69 440.0,56.91 439.0,56.91 439.0,56.81 438.0,56.81 438.0,57.10 437.0,57.10 437.0,56.98 436.0,56.98 436.0,56.81 435.0,56.81 435.0,56.94 434.0,56.94 434.0,56.75 433.0,56.75 433.0,56.64 432.0,56.64 432.0,56.59 431.0,56.59 431.0,56.60 430.0,56.60 430.0,56.70 429.0,56.70 429.0,56.52 428.0,56.52 428.0,57.01 427.0,57.01 427.0,57.19 426.0,57.19 426.0,57.10 425.0,57.10 425.0,57.09 424.0,57.09 424.0,56.59 423.0,56.59 423.0,57.14 422.0,57.14 422.0,57.07 421.0,57.07 421.0,56.90 420.0,56.90 420.0,56.66 419.0,56.66 419.0,57.08 418.0,57.08 418.0,56.57 417.0,56.57 417.0,57.10 416.0,57.10 416.0,56.69 415.0,56.69 415.0,57.13 414.0,57.13 414.0,56.75 413.0,56.75 413.0,56.64 412.0,56.64 412.0,56.84 411.0,56.84 411.0,56.93 410.0,56.93 410.0,56.83 409.0,56.83 409.0,57.12 408.0,57.12 408.0,56.97 407.0,56.97 407.0,56.69 406.0,56.69 406.0,56.64 405.0,56.64 405.0,56.77 404.0,56.77 404.0,56.67 403.0,56.67 403.0,57.22 402.0,57.22 402.0,57.07 401.0,57.07 401.0,57.21 400.0,57.21 400.0,56.90 399.0,56.90 399.0,56.65 398.0,56.65 398.0,56.93 397.0,56.93 397.0,56.79 396.0,56.79 396.0,56.75 395.0,56.75 395.0,57.12 394.0,57.12 394.0,56.71 393.0,56.71 393.0,56.73 392.0,56.73 392.0,56.63 391.0,56.63 391.0,57.12 390.0,57.12 390.0,57.13 389.0,57.13 389.0,56.71 388.0,56.71 388.0,57.09 387.0,57.09 387.0,56.68 386.0,56.68 386.0,57.15 385.0,57.15 385.0,57.23 384.0,57.23 384.0,56.96 383.0,56.96 383.0,56.86 382.0,56.86 382.0,57.27 381.0,57.27 381.0,56.79 380.0,56.79 380.0,56.76 379.0,56.76 379.0,56.77 378.0,56.77 378.0,56.59 377.0,56.59 377.0,56.75 376.0,56.75 376.0,56.68 375.0,56.68 375.0,56.85 374.0,56.85 374.0,56.86 373.0,56.86 373.0,56.80 372.0,56.80 372.0,56.60 371.0,56.60 371.0,57.10 370.0,57.10 370.0,57.09 369.0,57.09 369.0,56.87 368.0,56.87 368.0,56.68 367.0,56.68 367.0,56.60 366.0,56.60 366.0,56.86 365.0,56.86 365.0,57.04 364.0,57.04 364.0,57.18 363.0,57.18 363.0,56.83 362.0,56.83 362.0,56.88 361.0,56.88 361.0,56.63 360.0,56.63 360.0,56.94 359.0,56.94 359.0,57.10 358.0,57.10 358.0,56.70 357.0,56.70 357.0,56.81 356.0,56.81 356.0,56.86 355.0,56.86 355.0,57.13 354.0,57.13 354.0,57.20 353.0,57.20 353.0,57.38 352.0,57.38 352.0,57.36 351.0,57.36 351.0,57.25 350.0,57.25 350.0,57.19 349.0,57.19 349.0,56.97 348.0,56.97 348.0,57.10 347.0,57.10 347.0,56.86 346.0,56.86 346.0,57.52 345.0,57.52 345.0,57.35 344.0,57.35 344.0,57.29 343.0,57.29 343.0,57.18 342.0,57.18 342.0,57.23 341.0,57.23 341.0,56.96 340.0,56.96 340.0,57.13 339.0,57.13 339.0,57.00 338.0,57.00 338.0,57.12 337.0,57.12 337.0,57.00 336.0,57.00 336.0,57.15 335.0,57.15 335.0,56.76 334.0,56.76 334.0,56.90 333.0,56.90 333.0,56.67 332.0,56.67 332.0,57.26 331.0,57.26 331.0,57.21 330.0,57.21 330.0,57.10 329.0,57.10 329.0,56.55 328.0,56.55 328.0,56.65 327.0,56.65 327.0,56.96 326.0,56.96 326.0,56.90 325.0,56.90 325.0,56.52 324.0,56.52 324.0,56.43 323.0,56.43 323.0,55.35 322.0,55.35 322.0,55.49 321.0,55.49 321.0,55.39 320.0,55.39 320.0,55.48 319.0,55.48 319.0,55.33 318.0,55.33 318.0,55.54 317.0,55.54 317.0,55.29 316.0,55.29 316.0,55.31 315.0,55.31 315.0,55.47 314.0,55.47 314.0,55.41 313.0,55.41 313.0,55.43 312.0,55.43 312.0,55.50 311.0,55.50 311.0,55.41 310.0,55.41 310.0,55.47 309.0,55.47 309.0,55.54 308.0,55.54 308.0,55.67 307.0,55.67 307.0,55.64 306.0,55.64 306.0,55.83 305.0,55.83 305.0,55.59 304.0,55.59 304.0,55.62 303.0,55.62 303.0,55.84 302.0,55.84 302.0,55.85 301.0,55.85 301.0,55.66 300.0,55.66 300.0,55.87 299.0,55.87 299.0,55.68 298.0,55.68 298.0,55.81 297.0,55.81 297.0,55.71 296.0,55.71 296.0,55.69 295.0,55.69 295.0,55.95 294.0,55.95 294.0,55.77 293.0,55.77 293.0,55.67 292.0,55.67 292.0,55.89 291.0,55.89 291.0,55.84 290.0,55.84 290.0,55.93 289.0,55.93 289.0,55.72 288.0,55.72 288.0,55.70 287.0,55.70 287.0,55.96 286.0,55.96 286.0,55.90 285.0,55.90 285.0,55.71 284.0,55.71 284.0,55.94 283.0,55.94 283.0,56.00 282.0,56.00 282.0,55.75 281.0,55.75 281.0,55.98 280.0,55.98 280.0,55.68 279.0,55.68 279.0,56.06 278.0,56.06 278.0,55.94 277.0,55.94 277.0,55.91 276.0,55.91 276.0,56.00 275.0,56.00 275.0,56.01 274.0,56.01 274.0,56.42 273.0,56.42 273.0,56.70 272.0,56.70 272.0,56.85 271.0,56.85 271.0,57.27 270.0,57.27 270.0,57.37 269.0,57.37 269.0,56.92 268.0,56.92 268.0,57.36 267.0,57.36 267.0,57.41 266.0,57.41 266.0,57.37 265.0,57.37 265.0,56.98 264.0,56.98 264.0,56.77 263.0,56.77 263.0,56.74 262.0,56.74 262.0,57.36 261.0,57.36 261.0,57.34 260.0,57.34 260.0,57.45 259.0,57.45 259.0,56.84 258.0,56.84 258.0,56.99 257.0,56.99 257.0,57.13 256.0,57.13 256.0,56.88 255.0,56.88 255.0,57.32 254.0,57.32 254.0,56.90 253.0,56.90 253.0,57.30 252.0,57.30 252.0,57.25 251.0,57.25 251.0,57.73 250.0,57.73 250.0,57.50 249.0,57.50 249.0,57.45 248.0,57.45 248.0,57.00 247.0,57.00 247.0,57.21 246.0,57.21 246.0,57.34 245.0,57.34 245.0,57.04 244.0,57.04 244.0,57.69 243.0,57.69 243.0,57.89 242.0,57.89 242.0,57.16 241.0,57.16 241.0,57.62 240.0,57.62 240.0,57.87 239.0,57.87 239.0,58.04 238.0,58.04 238.0,57.68 237.0,57.68 237.0,58.08 236.0,58.08 236.0,58.06 235.0,58.06 235.0,57.45 234.0,57.45 234.0,58.13 233.0,58.13 233.0,57.76 232.0,57.76 232.0,57.77 231.0,57.77 231.0,58.06 230.0,58.06 230.0,58.11 229.0,58.11 229.0,58.01 228.0,58.01 228.0,58.00 227.0,58.00 227.0,58.12 226.0,58.12 226.0,57.79 225.0,57.79 225.0,58.14 224.0,58.14 224.0,57.58 223.0,57.58 223.0,57.77 222.0,57.77 222.0,57.98 221.0,57.98 221.0,57.68 220.0,57.68 220.0,57.96 219.0,57.96 219.0,57.99 218.0,57.99 218.0,58.41 217.0,58.41 217.0,58.37 216.0,58.37 216.0,58.08 215.0,58.08 215.0,58.45 214.0,58.45 214.0,58.44 213.0,58.44 213.0,59.25 212.0,59.25 212.0,55.39 211.0,55.39 211.0,55.30 210.0,55.30 210.0,55.43 209.0,55.43 209.0,55.27 208.0,55.27 208.0,55.32 207.0,55.32 207.0,55.37 206.0,55.37 206.0,55.25 205.0,55.25 205.0,55.42 204.0,55.42 204.0,55.41 203.0,55.41 203.0,55.47 202.0,55.47 202.0,55.29 201.0,55.29 201.0,55.37 200.0,55.37 200.0,55.34 199.0,55.34 199.0,55.47 198.0,55.47 198.0,55.32 197.0,55.32 197.0,55.28 196.0,55.28 196.0,55.31 195.0,55.31 195.0,55.34 194.0,55.34 194.0,55.41 193.0,55.41 193.0,55.28 192.0,55.28 192.0,55.28 191.0,55.28 191.0,55.45 190.0,55.45 190.0,55.27 189.0,55.27 189.0,55.30 188.0,55.30 188.0,55.33 187.0,55.33 187.0,55.47 186.0,55.47 186.0,55.33 185.0,55.33 185.0,55.38 184.0,55.38 184.0,55.42 183.0,55.42 183.0,55.32 182.0,55.32 182.0,55.35 181.0,55.35 181.0,55.30 180.0,55.30 180.0,55.41 179.0,55.41 179.0,55.41 178.0,55.41 178.0,55.44 177.0,55.44 177.0,55.52 176.0,55.52 176.0,55.68 175.0,55.68 175.0,55.74 174.0,55.74 174.0,55.84 173.0,55.84 173.0,55.78 172.0,55.78 172.0,55.74 171.0,55.74 171.0,55.74 170.0,55.74 170.0,55.77 169.0,55.77 169.0,55.80 168.0,55.80 168.0,55.86 167.0,55.86 167.0,55.94 166.0,55.94 166.0,55.94 165.0,55.94 165.0,55.94 164.0,55.94 164.0,55.81 163.0,55.81 163.0,55.73 162.0,55.73 162.0,55.86 161.0,55.86 161.0,55.95 160.0,55.95 160.0,55.89 159.0,55.89 159.0,55.84 158.0,55.84 158.0,55.81 157.0,55.81 157.0,55.92 156.0,55.92 156.0,56.06 155.0,56.06 155.0,55.83 154.0,55.83 154.0,56.00 153.0,56.00 153.0,56.21 152.0,56.21 152.0,55.91 151.0,55.91 151.0,56.09 150.0,56.09 150.0,56.13 149.0,56.13 149.0,55.96 148.0,55.96 148.0,56.11 147.0,56.11 147.0,55.99 146.0,55.99 146.0,55.94 145.0,55.94 145.0,56.11 144.0,56.11 144.0,56.29 143.0,56.29 143.0,56.36 142.0,56.36 142.0,56.15 141.0,56.15 141.0,56.39 140.0,56.39 140.0,56.38 139.0,56.38 139.0,55.97 138.0,55.97 138.0,56.31 137.0,56.31 137.0,56.11 136.0,56.11 136.0,56.18 135.0,56.18 135.0,56.23 134.0,56.23 134.0,56.46 133.0,56.46 133.0,56.04 132.0,56.04 132.0,56.30 131.0,56.30 131.0,56.49 130.0,56.49 130.0,56.13 129.0,56.13 129.0,56.42 128.0,56.42 128.0,56.45 127.0,56.45 127.0,56.26 126.0,56.26 126.0,56.24 125.0,56.24 125.0,56.41 124.0,56.41 124.0,57.16 123.0,57.16 123.0,57.11 122.0,57.11 122.0,57.49 121.0,57.49 121.0,57.41 120.0,57.41 120.0,57.43 119.0,57.43 119.0,57.11 118.0,57.11 118.0,57.43 117.0,57.43 117.0,56.95 116.0,56.95 116.0,57.20 115.0,57.20 115.0,56.86 114.0,56.86 114.0,57.24 113.0,57.24 113.0,57.65 112.0,57.65 112.0,57.70 111.0,57.70 111.0,57.03 110.0,57.03 110.0,56.95 109.0,56.95 109.0,57.51 108.0,57.51 108.0,57.05 107.0,57.05 107.0,57.14 106.0,57.14 106.0,57.09 105.0,57.09 105.0,57.08 104.0,57.08 104.0,57.13 103.0,57.13 103.0,57.83 102.0,57.83 102.0,57.75 101.0,57.75 101.0,57.59 100.0,57.59 100.0,57.63 99.0,57.63 99.0,57.45 98.0,57.45 98.0,57.28 97.0,57.28 97.0,57.77 96.0,57.77 96.0,57.42 95.0,57.42 95.0,57.17 94.0,57.17 94.0,57.73 93.0,57.73 93.0,58.00 92.0,58.00 92.0,57.63 91.0,57.63 91.0,57.59 90.0,57.59 90.0,57.68 89.0,57.68 89.0,57.72 88.0,57.72 88.0,57.73 87.0,57.73 87.0,57.76 86.0,57.76 86.0,58.14 85.0,58.14 85.0,57.83 84.0,57.83 84.0,58.01 83.0,58.01 83.0,57.42 82.0,57.42 82.0,58.06 81.0,58.06 81.0,57.57 80.0,57.57 80.0,57.64 79.0,57.64 79.0,57.53 78.0,57.53 78.0,58.00 77.0,58.00 77.0,58.55 76.0,58.55 76.0,58.67 75.0,58.67 75.0,58.45 74.0,58.45 74.0,57.93 73.0,57.93 73.0,58.64 72.0,58.64 72.0,55.62 71.0,55.62 71.0,55.56 70.0,55.56 70.0,55.58 69.0,55.58 69.0,55.50 68.0,55.50 68.0,55.40 67.0,55.40 67.0,55.40 66.0,55.40 66.0,55.63 65.0,55.63 65.0,55.48 64.0,55.48 64.0,55.42 63.0,55.42 63.0,56.88 62.0,56.88 62.0,57.32 61.0,57.32 61.0,56.97 60.0,56.97 60.0,57.76 59.0,57.76 59.0,57.49 58.0,57.49 58.0,57.36 57.0,57.36 57.0,58.10 56.0,58.10 56.0,57.69 55.0,57.69 55.0,58.39 54.0,58.39 54.0,58.25 53.0,58.25 53.0,58.35 52.0,58.35 52.0,58.47 51.0,58.47 51.0,58.85 50.0,58.85 50.0,58.17 49.0,58.17 49.0,58.88 48.0,58.88 48.0,58.78 47.0,58.78 47.0,59.26 46.0,59.26 46.0,59.02 45.0,59.02 45.0,59.08 44.0,59.08 44.0,59.58 43.0,59.58 43.0,59.76 42.0,59.76 42.0,59.85 41.0,59.85 41.0,60.10 40.0,60.10 40.0,59.69 39.0,59.69 39.0,60.20 38.0,60.20 38.0,55.53 37.0,55.53 37.0,55.66 36.0,55.66 36.0,55.53 35.0,55.53 35.0,55.53 34.0,55.53 34.0,55.57 33.0,55.57 33.0,55.58 32.0,55.58 32.0,55.63 31.0,55.63 31.0,55.81 30.0,55.81 30.0,55.63 29.0,55.63 29.0,55.98 28.0,55.98 28.0,55.72 27.0,55.72 27.0,55.73 26.0,55.73 26.0,55.90 25.0,55.90 25.0,55.98 24.0,55.98 24.0,55.79 23.0,55.79 23.0,55.46 22.0,55.46 22.0,56.89 21.0,56.89 21.0,58.58 20.0,58.58 20.0,58.06 19.0,58.06 19.0,58.62 18.0,58.62 18.0,58.54 17.0,58.54 17.0,58.20 16.0,58.20 16.0,59.22 15.0,59.22 15.0,58.73 14.0,58.73 14.0,59.04 13.0,59.04 13.0,58.92 12.0,58.92 12.0,59.31 11.0,59.31 11.0,58.98 10.0,58.98 10.0,60.08 9.0,60.08 9.0,59.56 8.0,59.56 8.0,60.28 7.0,60.28 7.0,60.14 6.0,60.14 6.0,59.60 5.0,59.60 5.0,60.70 4.0,60.70 4.0,59.82 3.0,59.82 3.0,60.43 2.0,60.43 2.0,60.96 1.0,60.96 1.0,61.01 0.0,61.01" fill="#000"/><rect x="0" y="53.5" width="463.20000000000005" height="2" fill="#0c0cc8"/><polygon points="0.0,147.46 1.0,147.46 1.0,146.86 2.0,146.86 2.0,147.96 3.0,147.96 3.0,148.60 4.0,148.60 4.0,148.21 5.0,148.21 5.0,151.15 6.0,151.15 6.0,149.93 7.0,149.93 7.0,151.64 8.0,151.64 8.0,151.34 9.0,151.34 9.0,149.95 10.0,149.95 10.0,150.68 11.0,150.68 11.0,151.23 12.0,151.23 12.0,151.45 13.0,151.45 13.0,153.17 14.0,153.17 14.0,153.22 15.0,153.22 15.0,152.65 16.0,152.65 16.0,154.68 17.0,154.68 17.0,153.38 18.0,153.38 18.0,153.45 19.0,153.45 19.0,153.76 20.0,153.76 20.0,155.08 21.0,155.08 21.0,153.87 22.0,153.87 22.0,154.45 23.0,154.45 23.0,159.65 24.0,159.65 24.0,159.64 25.0,159.64 25.0,159.99 26.0,159.99 26.0,159.88 27.0,159.88 27.0,159.88 28.0,159.88 28.0,159.88 29.0,159.88 29.0,159.89 30.0,159.89 30.0,160.00 31.0,160.00 31.0,160.01 32.0,160.01 32.0,160.05 33.0,160.05 33.0,160.18 34.0,160.18 34.0,160.29 35.0,160.29 35.0,160.38 36.0,160.38 36.0,160.36 37.0,160.36 37.0,155.26 38.0,155.26 38.0,151.10 39.0,151.10 39.0,154.35 40.0,154.35 40.0,153.53 41.0,153.53 41.0,152.89 42.0,152.89 42.0,152.58 43.0,152.58 43.0,153.94 44.0,153.94 44.0,155.43 45.0,155.43 45.0,155.02 46.0,155.02 46.0,154.26 47.0,154.26 47.0,154.30 48.0,154.30 48.0,156.12 49.0,156.12 49.0,156.03 50.0,156.03 50.0,155.47 51.0,155.47 51.0,156.27 52.0,156.27 52.0,155.93 53.0,155.93 53.0,154.54 54.0,154.54 54.0,149.90 55.0,149.90 55.0,149.90 56.0,149.90 56.0,154.54 57.0,154.54 57.0,157.05 58.0,157.05 58.0,156.51 59.0,156.51 59.0,156.56 60.0,156.56 60.0,156.58 61.0,156.58 61.0,157.57 62.0,157.57 62.0,157.62 63.0,157.62 63.0,160.51 64.0,160.51 64.0,160.54 65.0,160.54 65.0,160.52 66.0,160.52 66.0,160.51 67.0,160.51 67.0,160.50 68.0,160.50 68.0,160.51 69.0,160.51 69.0,160.53 70.0,160.53 70.0,160.53 71.0,160.53 71.0,155.08 72.0,155.08 72.0,150.80 73.0,150.80 73.0,153.41 74.0,153.41 74.0,155.29 75.0,155.29 75.0,154.99 76.0,154.99 76.0,156.81 77.0,156.81 77.0,156.13 78.0,156.13 78.0,156.03 79.0,156.03 79.0,155.47 80.0,155.47 80.0,155.32 81.0,155.32 81.0,155.41 82.0,155.41 82.0,155.43 83.0,155.43 83.0,156.27 84.0,156.27 84.0,156.83 85.0,156.83 85.0,156.38 86.0,156.38 86.0,157.15 87.0,157.15 87.0,156.45 88.0,156.45 88.0,157.05 89.0,157.05 89.0,157.51 90.0,157.51 90.0,156.81 91.0,156.81 91.0,157.74 92.0,157.74 92.0,157.45 93.0,157.45 93.0,156.68 94.0,156.68 94.0,156.53 95.0,156.53 95.0,157.07 96.0,157.07 96.0,157.20 97.0,157.20 97.0,157.42 98.0,157.42 98.0,157.85 99.0,157.85 99.0,157.83 100.0,157.83 100.0,157.14 101.0,157.14 101.0,156.94 102.0,156.94 102.0,157.48 103.0,157.48 103.0,158.28 104.0,158.28 104.0,158.22 105.0,158.22 105.0,157.92 106.0,157.92 106.0,156.88 107.0,156.88 107.0,153.80 108.0,153.80 108.0,156.88 109.0,156.88 109.0,157.67 110.0,157.67 110.0,157.35 111.0,157.35 111.0,157.08 112.0,157.08 112.0,158.19 113.0,158.19 113.0,158.36 114.0,158.36 114.0,158.04 115.0,158.04 115.0,158.78 116.0,158.78 116.0,158.09 117.0,158.09 117.0,158.16 118.0,158.16 118.0,158.07 119.0,158.07 119.0,157.52 120.0,157.52 120.0,157.33 121.0,157.33 121.0,157.94 122.0,157.94 122.0,157.87 123.0,157.87 123.0,158.54 124.0,158.54 124.0,159.12 125.0,159.12 125.0,159.63 126.0,159.63 126.0,159.19 127.0,159.19 127.0,159.11 128.0,159.11 128.0,159.11 129.0,159.11 129.0,158.87 130.0,158.87 130.0,158.98 131.0,158.98 131.0,159.05 132.0,159.05 132.0,159.08 133.0,159.08 133.0,158.90 134.0,158.90 134.0,158.92 135.0,158.92 135.0,158.87 136.0,158.87 136.0,159.24 137.0,159.24 137.0,159.33 138.0,159.33 138.0,159.02 139.0,159.02 139.0,159.46 140.0,159.46 140.0,159.58 141.0,159.58 141.0,159.33 142.0,159.33 142.0,159.10 143.0,159.10 143.0,159.26 144.0,159.26 144.0,159.48 145.0,159.48 145.0,159.28 146.0,159.28 146.0,159.27 147.0,159.27 147.0,159.67 148.0,159.67 148.0,159.73 149.0,159.73 149.0,159.33 150.0,159.33 150.0,159.60 151.0,159.60 151.0,159.96 152.0,159.96 152.0,159.61 153.0,159.61 153.0,159.82 154.0,159.82 154.0,159.84 155.0,159.84 155.0,159.83 156.0,159.83 156.0,159.49 157.0,159.49 157.0,159.48 158.0,159.48 158.0,159.42 159.0,159.42 159.0,159.63 160.0,159.63 160.0,159.97 161.0,159.97 161.0,159.79 162.0,159.79 162.0,159.74 163.0,159.74 163.0,159.87 164.0,159.87 164.0,160.16 165.0,160.16 165.0,160.27 166.0,160.27 166.0,160.17 167.0,160.17 167.0,160.34 168.0,160.34 168.0,160.20 169.0,160.20 169.0,160.16 170.0,160.16 170.0,160.15 171.0,160.15 171.0,160.32 172.0,160.32 172.0,160.24 173.0,160.24 173.0,160.38 174.0,160.38 174.0,160.51 175.0,160.51 175.0,160.58 176.0,160.58 176.0,160.44 177.0,160.44 177.0,160.42 178.0,160.42 178.0,160.49 179.0,160.49 179.0,160.52 180.0,160.52 180.0,160.59 181.0,160.59 181.0,160.59 182.0,160.59 182.0,160.51 183.0,160.51 183.0,160.60 184.0,160.60 184.0,160.62 185.0,160.62 185.0,160.60 186.0,160.60 186.0,160.54 187.0,160.54 187.0,160.59 188.0,160.59 188.0,160.54 189.0,160.54 189.0,160.59 190.0,160.59 190.0,160.60 191.0,160.60 191.0,160.59 192.0,160.59 192.0,160.60 193.0,160.60 193.0,160.62 194.0,160.62 194.0,160.63 195.0,160.63 195.0,160.57 196.0,160.57 196.0,160.64 197.0,160.64 197.0,160.65 198.0,160.65 198.0,160.61 199.0,160.61 199.0,160.60 200.0,160.60 200.0,160.63 201.0,160.63 201.0,160.63 202.0,160.63 202.0,160.59 203.0,160.59 203.0,160.64 204.0,160.64 204.0,160.58 205.0,160.58 205.0,160.67 206.0,160.67 206.0,160.68 207.0,160.68 207.0,160.63 208.0,160.63 208.0,160.62 209.0,160.62 209.0,160.67 210.0,160.67 210.0,160.72 211.0,160.72 211.0,160.69 212.0,160.69 212.0,157.52 213.0,157.52 213.0,158.05 214.0,158.05 214.0,158.03 215.0,158.03 215.0,157.64 216.0,157.64 216.0,157.31 217.0,157.31 217.0,153.82 218.0,153.82 218.0,148.70 219.0,148.70 219.0,148.70 220.0,148.70 220.0,153.82 221.0,153.82 221.0,156.04 222.0,156.04 222.0,155.87 223.0,155.87 223.0,156.74 224.0,156.74 224.0,155.48 225.0,155.48 225.0,154.75 226.0,154.75 226.0,154.80 227.0,154.80 227.0,154.49 228.0,154.49 228.0,156.62 229.0,156.62 229.0,156.31 230.0,156.31 230.0,154.99 231.0,154.99 231.0,156.63 232.0,156.63 232.0,156.26 233.0,156.26 233.0,156.03 234.0,156.03 234.0,155.19 235.0,155.19 235.0,155.70 236.0,155.70 236.0,157.36 237.0,157.36 237.0,157.94 238.0,157.94 238.0,156.93 239.0,156.93 239.0,155.87 240.0,155.87 240.0,157.41 241.0,157.41 241.0,158.12 242.0,158.12 242.0,157.64 243.0,157.64 243.0,156.67 244.0,156.67 244.0,156.42 245.0,156.42 245.0,155.97 246.0,155.97 246.0,156.92 247.0,156.92 247.0,157.82 248.0,157.82 248.0,156.34 249.0,156.34 249.0,156.19 250.0,156.19 250.0,157.53 251.0,157.53 251.0,158.17 252.0,158.17 252.0,157.74 253.0,157.74 253.0,157.92 254.0,157.92 254.0,157.11 255.0,157.11 255.0,157.93 256.0,157.93 256.0,157.37 257.0,157.37 257.0,156.50 258.0,156.50 258.0,157.50 259.0,157.50 259.0,156.37 260.0,156.37 260.0,155.96 261.0,155.96 261.0,157.37 262.0,157.37 262.0,157.81 263.0,157.81 263.0,157.29 264.0,157.29 264.0,157.14 265.0,157.14 265.0,156.88 266.0,156.88 266.0,156.26 267.0,156.26 267.0,155.91 268.0,155.91 268.0,156.86 269.0,156.86 269.0,157.48 270.0,157.48 270.0,156.97 271.0,156.97 271.0,156.49 272.0,156.49 272.0,156.50 273.0,156.50 273.0,156.88 274.0,156.88 274.0,154.50 275.0,154.50 275.0,157.30 276.0,157.30 276.0,159.36 277.0,159.36 277.0,159.55 278.0,159.55 278.0,159.35 279.0,159.35 279.0,159.35 280.0,159.35 280.0,159.43 281.0,159.43 281.0,159.79 282.0,159.79 282.0,159.59 283.0,159.59 283.0,159.59 284.0,159.59 284.0,159.62 285.0,159.62 285.0,159.48 286.0,159.48 286.0,159.41 287.0,159.41 287.0,159.69 288.0,159.69 288.0,159.53 289.0,159.53 289.0,159.81 290.0,159.81 290.0,159.56 291.0,159.56 291.0,159.66 292.0,159.66 292.0,159.78 293.0,159.78 293.0,159.69 294.0,159.69 294.0,159.75 295.0,159.75 295.0,159.53 296.0,159.53 296.0,159.53 297.0,159.53 297.0,159.56 298.0,159.56 298.0,159.74 299.0,159.74 299.0,159.92 300.0,159.92 300.0,159.60 301.0,159.60 301.0,159.66 302.0,159.66 302.0,159.70 303.0,159.70 303.0,159.52 304.0,159.52 304.0,159.57 305.0,159.57 305.0,159.63 306.0,159.63 306.0,159.75 307.0,159.75 307.0,159.61 308.0,159.61 308.0,160.03 309.0,160.03 309.0,160.62 310.0,160.62 310.0,160.54 311.0,160.54 311.0,160.65 312.0,160.65 312.0,160.56 313.0,160.56 313.0,160.59 314.0,160.59 314.0,160.67 315.0,160.67 315.0,160.57 316.0,160.57 316.0,160.53 317.0,160.53 317.0,160.63 318.0,160.63 318.0,160.69 319.0,160.69 319.0,160.62 320.0,160.62 320.0,160.60 321.0,160.60 321.0,160.66 322.0,160.66 322.0,160.64 323.0,160.64 323.0,159.04 324.0,159.04 324.0,159.15 325.0,159.15 325.0,159.03 326.0,159.03 326.0,159.26 327.0,159.26 327.0,159.90 328.0,159.90 328.0,159.96 329.0,159.96 329.0,159.34 330.0,159.34 330.0,159.44 331.0,159.44 331.0,159.15 332.0,159.15 332.0,159.38 333.0,159.38 333.0,160.02 334.0,160.02 334.0,159.91 335.0,159.91 335.0,159.42 336.0,159.42 336.0,159.52 337.0,159.52 337.0,159.66 338.0,159.66 338.0,159.37 339.0,159.37 339.0,160.12 340.0,160.12 340.0,160.10 341.0,160.10 341.0,159.24 342.0,159.24 342.0,159.30 343.0,159.30 343.0,159.30 344.0,159.30 344.0,159.22 345.0,159.22 345.0,158.63 346.0,158.63 346.0,157.88 347.0,157.88 347.0,158.08 348.0,158.08 348.0,157.81 349.0,157.81 349.0,158.54 350.0,158.54 350.0,158.14 351.0,158.14 351.0,158.28 352.0,158.28 352.0,158.16 353.0,158.16 353.0,158.29 354.0,158.29 354.0,157.97 355.0,157.97 355.0,157.64 356.0,157.64 356.0,157.56 357.0,157.56 357.0,158.37 358.0,158.37 358.0,158.87 359.0,158.87 359.0,158.63 360.0,158.63 360.0,158.91 361.0,158.91 361.0,158.94 362.0,158.94 362.0,159.46 363.0,159.46 363.0,159.93 364.0,159.93 364.0,160.10 365.0,160.10 365.0,159.27 366.0,159.27 366.0,159.56 367.0,159.56 367.0,159.28 368.0,159.28 368.0,159.18 369.0,159.18 369.0,159.97 370.0,159.97 370.0,159.92 371.0,159.92 371.0,158.95 372.0,158.95 372.0,159.30 373.0,159.30 373.0,159.48 374.0,159.48 374.0,159.65 375.0,159.65 375.0,159.96 376.0,159.96 376.0,160.13 377.0,160.13 377.0,159.35 378.0,159.35 378.0,159.48 379.0,159.48 379.0,159.44 380.0,159.44 380.0,159.52 381.0,159.52 381.0,159.95 382.0,159.95 382.0,160.16 383.0,160.16 383.0,159.41 384.0,159.41 384.0,159.23 385.0,159.23 385.0,159.22 386.0,159.22 386.0,159.30 387.0,159.30 387.0,160.02 388.0,160.02 388.0,159.93 389.0,159.93 389.0,159.54 390.0,159.54 390.0,159.56 391.0,159.56 391.0,159.34 392.0,159.34 392.0,159.55 393.0,159.55 393.0,160.18 394.0,160.18 394.0,159.93 395.0,159.93 395.0,159.56 396.0,159.56 396.0,159.52 397.0,159.52 397.0,159.19 398.0,159.19 398.0,159.44 399.0,159.44 399.0,159.92 400.0,159.92 400.0,159.99 401.0,159.99 401.0,159.52 402.0,159.52 402.0,159.43 403.0,159.43 403.0,159.38 404.0,159.38 404.0,159.39 405.0,159.39 405.0,160.15 406.0,160.15 406.0,159.93 407.0,159.93 407.0,159.28 408.0,159.28 408.0,159.22 409.0,159.22 409.0,159.52 410.0,159.52 410.0,159.16 411.0,159.16 411.0,159.19 412.0,159.19 412.0,160.06 413.0,160.06 413.0,159.21 414.0,159.21 414.0,159.37 415.0,159.37 415.0,159.44 416.0,159.44 416.0,159.62 417.0,159.62 417.0,160.10 418.0,160.10 418.0,159.94 419.0,159.94 419.0,159.33 420.0,159.33 420.0,159.40 421.0,159.40 421.0,159.20 422.0,159.20 422.0,159.13 423.0,159.13 423.0,159.08 424.0,159.08 424.0,159.32 425.0,159.32 425.0,159.43 426.0,159.43 426.0,159.52 427.0,159.52 427.0,159.51 428.0,159.51 428.0,159.60 429.0,159.60 429.0,160.11 430.0,160.11 430.0,160.17 431.0,160.17 431.0,159.33 432.0,159.33 432.0,159.17 433.0,159.17 433.0,159.17 434.0,159.17 434.0,159.47 435.0,159.47 435.0,159.61 436.0,159.61 436.0,160.00 437.0,160.00 437.0,159.58 438.0,159.58 438.0,159.26 439.0,159.26 439.0,159.47 440.0,159.47 440.0,159.44 441.0,159.44 441.0,160.19 442.0,160.19 442.0,160.05 443.0,160.05 443.0,159.21 444.0,159.21 444.0,157.90 445.0,157.90 445.0,155.50 446.0,155.50 446.0,157.90 447.0,157.90 447.0,160.09 448.0,160.09 448.0,159.92 449.0,159.92 449.0,159.46 450.0,159.46 450.0,159.16 451.0,159.16 451.0,159.46 452.0,159.46 452.0,159.50 453.0,159.50 453.0,159.43 454.0,159.43 454.0,160.13 455.0,160.13 455.0,159.36 456.0,159.36 456.0,159.13 457.0,159.13 457.0,159.34 458.0,159.34 458.0,159.58 459.0,159.58 459.0,160.07 460.0,160.07 460.0,160.17 461.0,160.17 461.0,159.63 462.0,159.63 462.0,159.32 463.0,159.32 463.0,163.17 462.0,163.17 462.0,163.53 461.0,163.53 461.0,162.75 460.0,162.75 460.0,162.78 459.0,162.78 459.0,163.72 458.0,163.72 458.0,163.67 457.0,163.67 457.0,163.52 456.0,163.52 456.0,163.18 455.0,163.18 455.0,162.80 454.0,162.80 454.0,163.16 453.0,163.16 453.0,163.44 452.0,163.44 452.0,162.98 451.0,162.98 451.0,163.11 450.0,163.11 450.0,163.16 449.0,163.16 449.0,162.78 448.0,162.78 448.0,162.69 447.0,162.69 447.0,164.50 446.0,164.50 446.0,166.50 445.0,166.50 445.0,164.50 444.0,164.50 444.0,163.14 443.0,163.14 443.0,162.75 442.0,162.75 442.0,162.82 441.0,162.82 441.0,163.23 440.0,163.23 440.0,163.61 439.0,163.61 439.0,163.60 438.0,163.60 438.0,163.31 437.0,163.31 437.0,162.71 436.0,162.71 436.0,163.65 435.0,163.65 435.0,163.45 434.0,163.45 434.0,163.59 433.0,163.59 433.0,163.52 432.0,163.52 432.0,163.50 431.0,163.50 431.0,162.73 430.0,162.73 430.0,162.76 429.0,162.76 429.0,163.34 428.0,163.34 428.0,163.40 427.0,163.40 427.0,163.13 426.0,163.13 426.0,163.09 425.0,163.09 425.0,163.15 424.0,163.15 424.0,163.48 423.0,163.48 423.0,163.37 422.0,163.37 422.0,163.31 421.0,163.31 421.0,163.21 420.0,163.21 420.0,163.63 419.0,163.63 419.0,162.80 418.0,162.80 418.0,162.66 417.0,162.66 417.0,163.55 416.0,163.55 416.0,163.36 415.0,163.36 415.0,163.19 414.0,163.19 414.0,163.39 413.0,163.39 413.0,162.69 412.0,162.69 412.0,163.25 411.0,163.25 411.0,163.39 410.0,163.39 410.0,163.59 409.0,163.59 409.0,163.65 408.0,163.65 408.0,163.62 407.0,163.62 407.0,162.85 406.0,162.85 406.0,162.86 405.0,162.86 405.0,163.09 404.0,163.09 404.0,163.13 403.0,163.13 403.0,163.16 402.0,163.16 402.0,163.13 401.0,163.13 401.0,162.83 400.0,162.83 400.0,162.72 399.0,162.72 399.0,163.29 398.0,163.29 398.0,163.61 397.0,163.61 397.0,163.38 396.0,163.38 396.0,163.54 395.0,163.54 395.0,162.68 394.0,162.68 394.0,162.75 393.0,162.75 393.0,163.60 392.0,163.60 392.0,163.68 391.0,163.68 391.0,163.61 390.0,163.61 390.0,163.45 389.0,163.45 389.0,162.68 388.0,162.68 388.0,162.85 387.0,162.85 387.0,163.51 386.0,163.51 386.0,163.31 385.0,163.31 385.0,163.40 384.0,163.40 384.0,163.03 383.0,163.03 383.0,162.82 382.0,162.82 382.0,162.73 381.0,162.73 381.0,163.10 380.0,163.10 380.0,163.12 379.0,163.12 379.0,163.06 378.0,163.06 378.0,163.29 377.0,163.29 377.0,162.66 376.0,162.66 376.0,162.66 375.0,162.66 375.0,163.28 374.0,163.28 374.0,163.52 373.0,163.52 373.0,163.20 372.0,163.20 372.0,163.17 371.0,163.17 371.0,162.86 370.0,162.86 370.0,162.71 369.0,162.71 369.0,163.38 368.0,163.38 368.0,163.14 367.0,163.14 367.0,163.42 366.0,163.42 366.0,163.18 365.0,163.18 365.0,162.68 364.0,162.68 364.0,162.83 363.0,162.83 363.0,163.26 362.0,163.26 362.0,163.42 361.0,163.42 361.0,163.70 360.0,163.70 360.0,164.14 359.0,164.14 359.0,163.97 358.0,163.97 358.0,164.35 357.0,164.35 357.0,163.58 356.0,163.58 356.0,163.67 355.0,163.67 355.0,163.91 354.0,163.91 354.0,164.00 353.0,164.00 353.0,163.66 352.0,163.66 352.0,163.99 351.0,163.99 351.0,164.52 350.0,164.52 350.0,164.75 349.0,164.75 349.0,164.38 348.0,164.38 348.0,163.78 347.0,163.78 347.0,163.85 346.0,163.85 346.0,163.91 345.0,163.91 345.0,163.43 344.0,163.43 344.0,163.44 343.0,163.44 343.0,163.66 342.0,163.66 342.0,163.67 341.0,163.67 341.0,162.91 340.0,162.91 340.0,162.81 339.0,162.81 339.0,163.57 338.0,163.57 338.0,163.25 337.0,163.25 337.0,163.24 336.0,163.24 336.0,163.17 335.0,163.17 335.0,162.76 334.0,162.76 334.0,162.75 333.0,162.75 333.0,163.47 332.0,163.47 332.0,163.15 331.0,163.15 331.0,163.22 330.0,163.22 330.0,163.49 329.0,163.49 329.0,162.74 328.0,162.74 328.0,162.87 327.0,162.87 327.0,163.44 326.0,163.44 326.0,163.68 325.0,163.68 325.0,163.42 324.0,163.42 324.0,163.36 323.0,163.36 323.0,162.18 322.0,162.18 322.0,162.20 321.0,162.20 321.0,162.31 320.0,162.31 320.0,162.29 319.0,162.29 319.0,162.26 318.0,162.26 318.0,162.27 317.0,162.27 317.0,162.31 316.0,162.31 316.0,162.27 315.0,162.27 315.0,162.26 314.0,162.26 314.0,162.24 313.0,162.24 313.0,162.27 312.0,162.27 312.0,162.16 311.0,162.16 311.0,162.24 310.0,162.24 310.0,162.29 309.0,162.29 309.0,162.73 308.0,162.73 308.0,163.07 307.0,163.07 307.0,163.18 306.0,163.18 306.0,163.02 305.0,163.02 305.0,162.78 304.0,162.78 304.0,162.83 303.0,162.83 303.0,163.07 302.0,163.07 302.0,163.21 301.0,163.21 301.0,163.12 300.0,163.12 300.0,162.92 299.0,162.92 299.0,163.14 298.0,163.14 298.0,163.14 297.0,163.14 297.0,163.25 296.0,163.25 296.0,162.96 295.0,162.96 295.0,162.76 294.0,162.76 294.0,162.80 293.0,162.80 293.0,162.77 292.0,162.77 292.0,162.91 291.0,162.91 291.0,163.12 290.0,163.12 290.0,162.90 289.0,162.90 289.0,163.10 288.0,163.10 288.0,162.98 287.0,162.98 287.0,163.36 286.0,163.36 286.0,163.09 285.0,163.09 285.0,163.06 284.0,163.06 284.0,163.15 283.0,163.15 283.0,162.86 282.0,162.86 282.0,163.04 281.0,163.04 281.0,163.08 280.0,163.08 280.0,163.14 279.0,163.14 279.0,163.46 278.0,163.46 278.0,163.18 277.0,163.18 277.0,163.00 276.0,163.00 276.0,165.10 275.0,165.10 275.0,167.50 274.0,167.50 274.0,165.62 273.0,165.62 273.0,166.16 272.0,166.16 272.0,165.95 271.0,165.95 271.0,165.83 270.0,165.83 270.0,164.89 269.0,164.89 269.0,165.33 268.0,165.33 268.0,164.52 267.0,164.52 267.0,165.19 266.0,165.19 266.0,164.63 265.0,164.63 265.0,165.10 264.0,165.10 264.0,165.23 263.0,165.23 263.0,165.56 262.0,165.56 262.0,165.07 261.0,165.07 261.0,165.56 260.0,165.56 260.0,165.15 259.0,165.15 259.0,165.23 258.0,165.23 258.0,166.47 257.0,166.47 257.0,166.53 256.0,166.53 256.0,166.06 255.0,166.06 255.0,164.85 254.0,164.85 254.0,165.12 253.0,165.12 253.0,164.40 252.0,164.40 252.0,164.56 251.0,164.56 251.0,165.64 250.0,165.64 250.0,165.51 249.0,165.51 249.0,165.76 248.0,165.76 248.0,164.69 247.0,164.69 247.0,164.95 246.0,164.95 246.0,164.99 245.0,164.99 245.0,165.59 244.0,165.59 244.0,165.83 243.0,165.83 243.0,165.14 242.0,165.14 242.0,165.46 241.0,165.46 241.0,166.71 240.0,166.71 240.0,166.12 239.0,166.12 239.0,165.13 238.0,165.13 238.0,166.31 237.0,166.31 237.0,165.30 236.0,165.30 236.0,165.95 235.0,165.95 235.0,166.72 234.0,166.72 234.0,166.59 233.0,166.59 233.0,166.77 232.0,166.77 232.0,165.27 231.0,165.27 231.0,164.81 230.0,164.81 230.0,165.69 229.0,165.69 229.0,166.17 228.0,166.17 228.0,167.62 227.0,167.62 227.0,166.52 226.0,166.52 226.0,167.08 225.0,167.08 225.0,166.05 224.0,166.05 224.0,164.94 223.0,164.94 223.0,166.36 222.0,166.36 222.0,166.08 221.0,166.08 221.0,168.70 220.0,168.70 220.0,173.50 219.0,173.50 219.0,173.50 218.0,173.50 218.0,168.70 217.0,168.70 217.0,165.39 216.0,165.39 216.0,165.38 215.0,165.38 215.0,164.98 214.0,164.98 214.0,165.13 213.0,165.13 213.0,166.25 212.0,166.25 212.0,162.24 211.0,162.24 211.0,162.23 210.0,162.23 210.0,162.19 209.0,162.19 209.0,162.20 208.0,162.20 208.0,162.25 207.0,162.25 207.0,162.23 206.0,162.23 206.0,162.25 205.0,162.25 205.0,162.23 204.0,162.23 204.0,162.21 203.0,162.21 203.0,162.23 202.0,162.23 202.0,162.27 201.0,162.27 201.0,162.23 200.0,162.23 200.0,162.22 199.0,162.22 199.0,162.30 198.0,162.30 198.0,162.26 197.0,162.26 197.0,162.25 196.0,162.25 196.0,162.29 195.0,162.29 195.0,162.29 194.0,162.29 194.0,162.29 193.0,162.29 193.0,162.23 192.0,162.23 192.0,162.28 191.0,162.28 191.0,162.27 190.0,162.27 190.0,162.29 189.0,162.29 189.0,162.24 188.0,162.24 188.0,162.30 187.0,162.30 187.0,162.31 186.0,162.31 186.0,162.31 185.0,162.31 185.0,162.29 184.0,162.29 184.0,162.34 183.0,162.34 183.0,162.29 182.0,162.29 182.0,162.32 181.0,162.32 181.0,162.31 180.0,162.31 180.0,162.32 179.0,162.32 179.0,162.30 178.0,162.30 178.0,162.32 177.0,162.32 177.0,162.28 176.0,162.28 176.0,162.33 175.0,162.33 175.0,162.38 174.0,162.38 174.0,162.61 173.0,162.61 173.0,162.57 172.0,162.57 172.0,162.56 171.0,162.56 171.0,162.63 170.0,162.63 170.0,162.46 169.0,162.46 169.0,162.56 168.0,162.56 168.0,162.90 167.0,162.90 167.0,162.86 166.0,162.86 166.0,162.78 165.0,162.78 165.0,162.82 164.0,162.82 164.0,163.08 163.0,163.08 163.0,162.82 162.0,162.82 162.0,162.78 161.0,162.78 161.0,162.86 160.0,162.86 160.0,162.70 159.0,162.70 159.0,162.80 158.0,162.80 158.0,162.93 157.0,162.93 157.0,162.76 156.0,162.76 156.0,162.99 155.0,162.99 155.0,163.05 154.0,163.05 154.0,162.97 153.0,162.97 153.0,163.06 152.0,163.06 152.0,163.38 151.0,163.38 151.0,163.12 150.0,163.12 150.0,163.42 149.0,163.42 149.0,163.53 148.0,163.53 148.0,163.29 147.0,163.29 147.0,163.16 146.0,163.16 146.0,163.07 145.0,163.07 145.0,163.34 144.0,163.34 144.0,163.71 143.0,163.71 143.0,163.54 142.0,163.54 142.0,163.30 141.0,163.30 141.0,163.77 140.0,163.77 140.0,163.87 139.0,163.87 139.0,163.73 138.0,163.73 138.0,163.79 137.0,163.79 137.0,163.73 136.0,163.73 136.0,163.42 135.0,163.42 135.0,163.82 134.0,163.82 134.0,163.73 133.0,163.73 133.0,163.49 132.0,163.49 132.0,163.60 131.0,163.60 131.0,163.61 130.0,163.61 130.0,163.70 129.0,163.70 129.0,163.34 128.0,163.34 128.0,163.80 127.0,163.80 127.0,163.73 126.0,163.73 126.0,163.82 125.0,163.82 125.0,163.96 124.0,163.96 124.0,164.44 123.0,164.44 123.0,163.85 122.0,163.85 122.0,163.94 121.0,163.94 121.0,164.06 120.0,164.06 120.0,164.33 119.0,164.33 119.0,164.66 118.0,164.66 118.0,164.45 117.0,164.45 117.0,164.44 116.0,164.44 116.0,164.37 115.0,164.37 115.0,164.43 114.0,164.43 114.0,163.60 113.0,163.60 113.0,163.99 112.0,163.99 112.0,164.06 111.0,164.06 111.0,164.93 110.0,164.93 110.0,165.18 109.0,165.18 109.0,165.10 108.0,165.10 108.0,167.50 107.0,167.50 107.0,165.10 106.0,165.10 106.0,164.58 105.0,164.58 105.0,164.14 104.0,164.14 104.0,164.26 103.0,164.26 103.0,164.47 102.0,164.47 102.0,165.19 101.0,165.19 101.0,164.88 100.0,164.88 100.0,165.70 99.0,165.70 99.0,165.37 98.0,165.37 98.0,164.65 97.0,164.65 97.0,165.71 96.0,165.71 96.0,165.39 95.0,165.39 95.0,166.21 94.0,166.21 94.0,166.43 93.0,166.43 93.0,166.32 92.0,166.32 92.0,165.95 91.0,165.95 91.0,165.64 90.0,165.64 90.0,165.13 89.0,165.13 89.0,165.53 88.0,165.53 88.0,165.23 87.0,165.23 87.0,165.20 86.0,165.20 86.0,165.97 85.0,165.97 85.0,166.24 84.0,166.24 84.0,166.28 83.0,166.28 83.0,167.21 82.0,167.21 82.0,167.03 81.0,167.03 81.0,167.05 80.0,167.05 80.0,167.41 79.0,167.41 79.0,167.25 78.0,167.25 78.0,166.79 77.0,166.79 77.0,166.83 76.0,166.83 76.0,167.31 75.0,167.31 75.0,167.10 74.0,167.10 74.0,167.74 73.0,167.74 73.0,171.90 72.0,171.90 72.0,167.74 71.0,167.74 71.0,162.30 70.0,162.30 70.0,162.35 69.0,162.35 69.0,162.30 68.0,162.30 68.0,162.23 67.0,162.23 67.0,162.26 66.0,162.26 66.0,162.30 65.0,162.30 65.0,162.40 64.0,162.40 64.0,162.37 63.0,162.37 63.0,165.66 62.0,165.66 62.0,166.05 61.0,166.05 61.0,165.89 60.0,165.89 60.0,165.46 59.0,165.46 59.0,165.07 58.0,165.07 58.0,165.31 57.0,165.31 57.0,168.22 56.0,168.22 56.0,172.70 55.0,172.70 55.0,172.70 54.0,172.70 54.0,168.22 53.0,168.22 53.0,166.28 52.0,166.28 52.0,166.15 51.0,166.15 51.0,165.67 50.0,165.67 50.0,166.30 49.0,166.30 49.0,167.14 48.0,167.14 48.0,166.58 47.0,166.58 47.0,167.81 46.0,167.81 46.0,168.35 45.0,168.35 45.0,168.71 44.0,168.71 44.0,168.52 43.0,168.52 43.0,168.06 42.0,168.06 42.0,168.48 41.0,168.48 41.0,169.03 40.0,169.03 40.0,169.16 39.0,169.16 39.0,171.00 38.0,171.00 38.0,167.20 37.0,167.20 37.0,162.56 36.0,162.56 36.0,162.66 35.0,162.66 35.0,162.65 34.0,162.65 34.0,162.74 33.0,162.74 33.0,162.66 32.0,162.66 32.0,162.59 31.0,162.59 31.0,162.77 30.0,162.77 30.0,162.80 29.0,162.80 29.0,162.82 28.0,162.82 28.0,162.51 27.0,162.51 27.0,162.71 26.0,162.71 26.0,163.06 25.0,163.06 25.0,163.26 24.0,163.26 24.0,163.20 23.0,163.20 23.0,169.11 22.0,169.11 22.0,168.58 21.0,168.58 21.0,168.20 20.0,168.20 20.0,169.78 19.0,169.78 19.0,169.88 18.0,169.88 18.0,170.98 17.0,170.98 17.0,169.81 16.0,169.81 16.0,169.45 15.0,169.45 15.0,169.68 14.0,169.68 14.0,171.48 13.0,171.48 13.0,171.48 12.0,171.48 12.0,171.61 11.0,171.61 11.0,171.72 10.0,171.72 10.0,172.67 9.0,172.67 9.0,172.51 8.0,172.51 8.0,172.33 7.0,172.33 7.0,173.51 6.0,173.51 6.0,171.64 5.0,171.64 5.0,173.29 4.0,173.29 4.0,170.99 3.0,170.99 3.0,174.41 2.0,174.41 2.0,173.32 1.0,173.32 1.0,175.08 0.0,175.08" fill="#8d909c"/><polygon points="0.0,153.14 1.0,153.14 1.0,153.08 2.0,153.08 2.0,153.52 3.0,153.52 3.0,155.18 4.0,155.18 4.0,155.34 5.0,155.34 5.0,155.22 6.0,155.22 6.0,155.88 7.0,155.88 7.0,155.92 8.0,155.92 8.0,155.11 9.0,155.11 9.0,155.57 10.0,155.57 10.0,155.36 11.0,155.36 11.0,155.98 12.0,155.98 12.0,156.83 13.0,156.83 13.0,156.23 14.0,156.23 14.0,156.67 15.0,156.67 15.0,156.30 16.0,156.30 16.0,156.19 17.0,156.19 17.0,157.17 18.0,157.17 18.0,157.03 19.0,157.03 19.0,157.32 20.0,157.32 20.0,157.80 21.0,157.80 21.0,157.29 22.0,157.29 22.0,158.30 23.0,158.30 23.0,160.50 24.0,160.50 24.0,160.60 25.0,160.60 25.0,160.46 26.0,160.46 26.0,160.36 27.0,160.36 27.0,160.43 28.0,160.43 28.0,160.39 29.0,160.39 29.0,160.46 30.0,160.46 30.0,160.65 31.0,160.65 31.0,160.66 32.0,160.66 32.0,160.67 33.0,160.67 33.0,160.56 34.0,160.56 34.0,160.58 35.0,160.58 35.0,160.61 36.0,160.61 36.0,160.57 37.0,160.57 37.0,160.66 38.0,160.66 38.0,158.07 39.0,158.07 39.0,158.14 40.0,158.14 40.0,157.96 41.0,157.96 41.0,157.83 42.0,157.83 42.0,157.79 43.0,157.79 43.0,157.99 44.0,157.99 44.0,158.26 45.0,158.26 45.0,158.16 46.0,158.16 46.0,158.30 47.0,158.30 47.0,158.54 48.0,158.54 48.0,158.37 49.0,158.37 49.0,158.12 50.0,158.12 50.0,158.34 51.0,158.34 51.0,158.55 52.0,158.55 52.0,158.36 53.0,158.36 53.0,158.38 54.0,158.38 54.0,158.61 55.0,158.61 55.0,158.81 56.0,158.81 56.0,159.17 57.0,159.17 57.0,159.10 58.0,159.10 58.0,158.72 59.0,158.72 59.0,158.86 60.0,158.86 60.0,158.88 61.0,158.88 61.0,159.22 62.0,159.22 62.0,159.26 63.0,159.26 63.0,160.62 64.0,160.62 64.0,160.73 65.0,160.73 65.0,160.53 66.0,160.53 66.0,160.51 67.0,160.51 67.0,160.59 68.0,160.59 68.0,160.51 69.0,160.51 69.0,160.63 70.0,160.63 70.0,160.63 71.0,160.63 71.0,160.58 72.0,160.58 72.0,158.28 73.0,158.28 73.0,158.66 74.0,158.66 74.0,157.96 75.0,157.96 75.0,158.09 76.0,158.09 76.0,158.38 77.0,158.38 77.0,158.13 78.0,158.13 78.0,158.96 79.0,158.96 79.0,159.00 80.0,159.00 80.0,158.63 81.0,158.63 81.0,159.10 82.0,159.10 82.0,158.48 83.0,158.48 83.0,159.17 84.0,159.17 84.0,158.82 85.0,158.82 85.0,159.09 86.0,159.09 86.0,159.12 87.0,159.12 87.0,159.17 88.0,159.17 88.0,159.19 89.0,159.19 89.0,159.18 90.0,159.18 90.0,158.84 91.0,158.84 91.0,159.25 92.0,159.25 92.0,159.18 93.0,159.18 93.0,159.19 94.0,159.19 94.0,159.24 95.0,159.24 95.0,159.08 96.0,159.08 96.0,159.50 97.0,159.50 97.0,158.91 98.0,158.91 98.0,158.90 99.0,158.90 99.0,159.46 100.0,159.46 100.0,159.48 101.0,159.48 101.0,158.97 102.0,158.97 102.0,159.43 103.0,159.43 103.0,159.40 104.0,159.40 104.0,159.56 105.0,159.56 105.0,159.17 106.0,159.17 106.0,159.53 107.0,159.53 107.0,159.12 108.0,159.12 108.0,159.35 109.0,159.35 109.0,159.43 110.0,159.43 110.0,159.61 111.0,159.61 111.0,159.27 112.0,159.27 112.0,159.64 113.0,159.64 113.0,159.62 114.0,159.62 114.0,159.49 115.0,159.49 115.0,159.75 116.0,159.75 116.0,159.51 117.0,159.51 117.0,159.28 118.0,159.28 118.0,159.54 119.0,159.54 119.0,159.28 120.0,159.28 120.0,159.53 121.0,159.53 121.0,159.42 122.0,159.42 122.0,159.31 123.0,159.31 123.0,159.66 124.0,159.66 124.0,159.96 125.0,159.96 125.0,160.08 126.0,160.08 126.0,160.17 127.0,160.17 127.0,159.79 128.0,159.79 128.0,159.88 129.0,159.88 129.0,160.12 130.0,160.12 130.0,160.00 131.0,160.00 131.0,160.13 132.0,160.13 132.0,160.17 133.0,160.17 133.0,159.85 134.0,159.85 134.0,159.98 135.0,159.98 135.0,159.95 136.0,159.95 136.0,160.28 137.0,160.28 137.0,160.05 138.0,160.05 138.0,160.28 139.0,160.28 139.0,159.97 140.0,159.97 140.0,160.02 141.0,160.02 141.0,160.05 142.0,160.05 142.0,160.03 143.0,160.03 143.0,160.10 144.0,160.10 144.0,160.35 145.0,160.35 145.0,160.12 146.0,160.12 146.0,160.26 147.0,160.26 147.0,160.13 148.0,160.13 148.0,160.05 149.0,160.05 149.0,160.04 150.0,160.04 150.0,160.22 151.0,160.22 151.0,160.22 152.0,160.22 152.0,160.36 153.0,160.36 153.0,160.41 154.0,160.41 154.0,160.11 155.0,160.11 155.0,160.38 156.0,160.38 156.0,160.32 157.0,160.32 157.0,160.26 158.0,160.26 158.0,160.31 159.0,160.31 159.0,160.25 160.0,160.25 160.0,160.43 161.0,160.43 161.0,160.27 162.0,160.27 162.0,160.40 163.0,160.40 163.0,160.26 164.0,160.26 164.0,160.34 165.0,160.34 165.0,160.39 166.0,160.39 166.0,160.37 167.0,160.37 167.0,160.56 168.0,160.56 168.0,160.59 169.0,160.59 169.0,160.33 170.0,160.33 170.0,160.54 171.0,160.54 171.0,160.58 172.0,160.58 172.0,160.54 173.0,160.54 173.0,160.46 174.0,160.46 174.0,160.55 175.0,160.55 175.0,160.60 176.0,160.60 176.0,160.44 177.0,160.44 177.0,160.42 178.0,160.42 178.0,160.49 179.0,160.49 179.0,160.52 180.0,160.52 180.0,160.64 181.0,160.64 181.0,160.62 182.0,160.62 182.0,160.51 183.0,160.51 183.0,160.61 184.0,160.61 184.0,160.71 185.0,160.71 185.0,160.62 186.0,160.62 186.0,160.54 187.0,160.54 187.0,160.59 188.0,160.59 188.0,160.54 189.0,160.54 189.0,160.67 190.0,160.67 190.0,160.71 191.0,160.71 191.0,160.68 192.0,160.68 192.0,160.60 193.0,160.60 193.0,160.62 194.0,160.62 194.0,160.75 195.0,160.75 195.0,160.57 196.0,160.57 196.0,160.64 197.0,160.64 197.0,160.74 198.0,160.74 198.0,160.72 199.0,160.72 199.0,160.60 200.0,160.60 200.0,160.63 201.0,160.63 201.0,160.75 202.0,160.75 202.0,160.59 203.0,160.59 203.0,160.70 204.0,160.70 204.0,160.58 205.0,160.58 205.0,160.78 206.0,160.78 206.0,160.72 207.0,160.72 207.0,160.79 208.0,160.79 208.0,160.63 209.0,160.63 209.0,160.78 210.0,160.78 210.0,160.82 211.0,160.82 211.0,160.82 212.0,160.82 212.0,158.63 213.0,158.63 213.0,159.10 214.0,159.10 214.0,158.57 215.0,158.57 215.0,158.87 216.0,158.87 216.0,158.90 217.0,158.90 217.0,158.85 218.0,158.85 218.0,158.40 219.0,158.40 219.0,158.36 220.0,158.36 220.0,158.52 221.0,158.52 221.0,158.67 222.0,158.67 222.0,158.43 223.0,158.43 223.0,158.83 224.0,158.83 224.0,158.84 225.0,158.84 225.0,158.50 226.0,158.50 226.0,158.74 227.0,158.74 227.0,158.30 228.0,158.30 228.0,158.25 229.0,158.25 229.0,158.33 230.0,158.33 230.0,158.22 231.0,158.22 231.0,158.51 232.0,158.51 232.0,158.68 233.0,158.68 233.0,158.90 234.0,158.90 234.0,158.87 235.0,158.87 235.0,158.58 236.0,158.58 236.0,158.52 237.0,158.52 237.0,158.80 238.0,158.80 238.0,158.56 239.0,158.56 239.0,158.47 240.0,158.47 240.0,158.99 241.0,158.99 241.0,158.72 242.0,158.72 242.0,158.44 243.0,158.44 243.0,158.37 244.0,158.37 244.0,158.47 245.0,158.47 245.0,158.74 246.0,158.74 246.0,158.41 247.0,158.41 247.0,158.97 248.0,158.97 248.0,158.39 249.0,158.39 249.0,158.61 250.0,158.61 250.0,158.88 251.0,158.88 251.0,158.42 252.0,158.42 252.0,158.73 253.0,158.73 253.0,158.82 254.0,158.82 254.0,159.07 255.0,159.07 255.0,159.20 256.0,159.20 256.0,158.75 257.0,158.75 257.0,159.20 258.0,159.20 258.0,159.22 259.0,159.22 259.0,159.19 260.0,159.19 260.0,158.57 261.0,158.57 261.0,159.13 262.0,159.13 262.0,159.15 263.0,159.15 263.0,159.18 264.0,159.18 264.0,158.94 265.0,158.94 265.0,159.06 266.0,159.06 266.0,159.02 267.0,159.02 267.0,159.04 268.0,159.04 268.0,158.66 269.0,158.66 269.0,158.79 270.0,158.79 270.0,159.21 271.0,159.21 271.0,159.27 272.0,159.27 272.0,159.10 273.0,159.10 273.0,159.19 274.0,159.19 274.0,159.64 275.0,159.64 275.0,159.94 276.0,159.94 276.0,159.91 277.0,159.91 277.0,160.11 278.0,160.11 278.0,160.08 279.0,160.08 279.0,159.82 280.0,159.82 280.0,160.20 281.0,160.20 281.0,160.08 282.0,160.08 282.0,159.89 283.0,159.89 283.0,159.83 284.0,159.83 284.0,160.04 285.0,160.04 285.0,159.91 286.0,159.91 286.0,160.13 287.0,160.13 287.0,160.04 288.0,160.04 288.0,159.93 289.0,159.93 289.0,160.21 290.0,160.21 290.0,159.99 291.0,159.99 291.0,159.95 292.0,159.95 292.0,160.16 293.0,160.16 293.0,159.97 294.0,159.97 294.0,159.95 295.0,159.95 295.0,159.99 296.0,159.99 296.0,160.12 297.0,160.12 297.0,160.24 298.0,160.24 298.0,160.03 299.0,160.03 299.0,159.99 300.0,159.99 300.0,160.13 301.0,160.13 301.0,160.09 302.0,160.09 302.0,160.05 303.0,160.05 303.0,160.09 304.0,160.09 304.0,160.20 305.0,160.20 305.0,160.08 306.0,160.08 306.0,160.18 307.0,160.18 307.0,160.21 308.0,160.21 308.0,160.54 309.0,160.54 309.0,160.71 310.0,160.71 310.0,160.81 311.0,160.81 311.0,160.70 312.0,160.70 312.0,160.80 313.0,160.80 313.0,160.78 314.0,160.78 314.0,160.83 315.0,160.83 315.0,160.77 316.0,160.77 316.0,160.83 317.0,160.83 317.0,160.63 318.0,160.63 318.0,160.77 319.0,160.77 319.0,160.77 320.0,160.77 320.0,160.74 321.0,160.74 321.0,160.66 322.0,160.66 322.0,160.76 323.0,160.76 323.0,159.79 324.0,159.79 324.0,159.43 325.0,159.43 325.0,159.63 326.0,159.63 326.0,159.65 327.0,159.65 327.0,160.65 328.0,160.65 328.0,160.70 329.0,160.70 329.0,159.34 330.0,159.34 330.0,159.78 331.0,159.78 331.0,159.72 332.0,159.72 332.0,159.66 333.0,159.66 333.0,160.75 334.0,160.75 334.0,160.66 335.0,160.66 335.0,159.42 336.0,159.42 336.0,159.52 337.0,159.52 337.0,159.66 338.0,159.66 338.0,159.37 339.0,159.37 339.0,160.82 340.0,160.82 340.0,160.81 341.0,160.81 341.0,159.44 342.0,159.44 342.0,159.49 343.0,159.49 343.0,159.57 344.0,159.57 344.0,159.42 345.0,159.42 345.0,159.34 346.0,159.34 346.0,159.07 347.0,159.07 347.0,158.84 348.0,158.84 348.0,159.41 349.0,159.41 349.0,159.37 350.0,159.37 350.0,158.96 351.0,158.96 351.0,159.12 352.0,159.12 352.0,159.36 353.0,159.36 353.0,159.47 354.0,159.47 354.0,159.37 355.0,159.37 355.0,158.97 356.0,158.97 356.0,159.42 357.0,159.42 357.0,158.90 358.0,158.90 358.0,159.36 359.0,159.36 359.0,159.30 360.0,159.30 360.0,159.40 361.0,159.40 361.0,159.46 362.0,159.46 362.0,159.69 363.0,159.69 363.0,160.68 364.0,160.68 364.0,160.81 365.0,160.81 365.0,159.85 366.0,159.85 366.0,159.82 367.0,159.82 367.0,159.84 368.0,159.84 368.0,159.78 369.0,159.78 369.0,160.71 370.0,160.71 370.0,160.67 371.0,160.67 371.0,159.51 372.0,159.51 372.0,159.50 373.0,159.50 373.0,159.48 374.0,159.48 374.0,159.79 375.0,159.79 375.0,160.70 376.0,160.70 376.0,160.83 377.0,160.83 377.0,159.73 378.0,159.73 378.0,159.58 379.0,159.58 379.0,159.80 380.0,159.80 380.0,159.88 381.0,159.88 381.0,160.69 382.0,160.69 382.0,160.86 383.0,160.86 383.0,159.54 384.0,159.54 384.0,159.47 385.0,159.47 385.0,159.66 386.0,159.66 386.0,159.49 387.0,159.49 387.0,160.75 388.0,160.75 388.0,160.67 389.0,160.67 389.0,159.68 390.0,159.68 390.0,159.94 391.0,159.94 391.0,159.53 392.0,159.53 392.0,159.55 393.0,159.55 393.0,160.87 394.0,160.87 394.0,160.68 395.0,160.68 395.0,159.88 396.0,159.88 396.0,159.71 397.0,159.71 397.0,159.46 398.0,159.46 398.0,159.70 399.0,159.70 399.0,160.67 400.0,160.67 400.0,160.72 401.0,160.72 401.0,159.52 402.0,159.52 402.0,159.43 403.0,159.43 403.0,159.54 404.0,159.54 404.0,159.66 405.0,159.66 405.0,160.85 406.0,160.85 406.0,160.67 407.0,160.67 407.0,159.64 408.0,159.64 408.0,159.50 409.0,159.50 409.0,159.68 410.0,159.68 410.0,159.58 411.0,159.58 411.0,159.60 412.0,159.60 412.0,160.78 413.0,160.78 413.0,159.88 414.0,159.88 414.0,159.82 415.0,159.82 415.0,159.46 416.0,159.46 416.0,159.62 417.0,159.62 417.0,160.80 418.0,160.80 418.0,160.68 419.0,160.68 419.0,159.51 420.0,159.51 420.0,159.62 421.0,159.62 421.0,159.75 422.0,159.75 422.0,159.42 423.0,159.42 423.0,159.41 424.0,159.41 424.0,159.77 425.0,159.77 425.0,159.57 426.0,159.57 426.0,159.88 427.0,159.88 427.0,159.76 428.0,159.76 428.0,159.82 429.0,159.82 429.0,160.81 430.0,160.81 430.0,160.86 431.0,160.86 431.0,159.57 432.0,159.57 432.0,159.91 433.0,159.91 433.0,159.42 434.0,159.42 434.0,159.61 435.0,159.61 435.0,159.67 436.0,159.67 436.0,160.73 437.0,160.73 437.0,159.77 438.0,159.77 438.0,159.47 439.0,159.47 439.0,159.89 440.0,159.89 440.0,159.44 441.0,159.44 441.0,160.88 442.0,160.88 442.0,160.77 443.0,160.77 443.0,159.66 444.0,159.66 444.0,159.56 445.0,159.56 445.0,159.63 446.0,159.63 446.0,159.79 447.0,159.79 447.0,160.80 448.0,160.80 448.0,160.67 449.0,160.67 449.0,159.62 450.0,159.62 450.0,159.82 451.0,159.82 451.0,159.68 452.0,159.68 452.0,159.78 453.0,159.78 453.0,159.93 454.0,159.93 454.0,160.83 455.0,160.83 455.0,159.86 456.0,159.86 456.0,159.65 457.0,159.65 457.0,159.91 458.0,159.91 458.0,159.75 459.0,159.75 459.0,160.78 460.0,160.78 460.0,160.86 461.0,160.86 461.0,159.81 462.0,159.81 462.0,159.65 463.0,159.65 463.0,162.97 462.0,162.97 462.0,162.91 461.0,162.91 461.0,162.07 460.0,162.07 460.0,162.10 459.0,162.10 459.0,162.78 458.0,162.78 458.0,162.87 457.0,162.87 457.0,162.77 456.0,162.77 456.0,163.16 455.0,163.16 455.0,162.12 454.0,162.12 454.0,163.01 453.0,163.01 453.0,163.10 452.0,163.10 452.0,162.93 451.0,162.93 451.0,162.84 450.0,162.84 450.0,163.01 449.0,163.01 449.0,162.10 448.0,162.10 448.0,162.03 447.0,162.03 447.0,163.12 446.0,163.12 446.0,162.92 445.0,162.92 445.0,163.05 444.0,163.05 444.0,163.14 443.0,163.14 443.0,162.07 442.0,162.07 442.0,162.13 441.0,162.13 441.0,162.80 440.0,162.80 440.0,162.99 439.0,162.99 439.0,163.14 438.0,163.14 438.0,163.03 437.0,163.03 437.0,162.04 436.0,162.04 436.0,162.86 435.0,162.86 435.0,163.00 434.0,163.00 434.0,163.08 433.0,163.08 433.0,162.80 432.0,162.80 432.0,163.00 431.0,163.00 431.0,162.06 430.0,162.06 430.0,162.08 429.0,162.08 429.0,162.75 428.0,162.75 428.0,163.16 427.0,163.16 427.0,163.00 426.0,163.00 426.0,162.79 425.0,162.79 425.0,162.90 424.0,162.90 424.0,162.94 423.0,162.94 423.0,163.00 422.0,163.00 422.0,162.75 421.0,162.75 421.0,163.02 420.0,163.02 420.0,163.17 419.0,163.17 419.0,162.11 418.0,162.11 418.0,162.01 417.0,162.01 417.0,163.06 416.0,163.06 416.0,163.03 415.0,163.03 415.0,162.84 414.0,162.84 414.0,162.75 413.0,162.75 413.0,162.03 412.0,162.03 412.0,162.78 411.0,162.78 411.0,163.03 410.0,163.03 410.0,163.13 409.0,163.13 409.0,162.76 408.0,162.76 408.0,162.78 407.0,162.78 407.0,162.16 406.0,162.16 406.0,162.16 405.0,162.16 405.0,163.03 404.0,163.03 404.0,163.07 403.0,163.07 403.0,163.16 402.0,163.16 402.0,163.13 401.0,163.13 401.0,162.14 400.0,162.14 400.0,162.05 399.0,162.05 399.0,163.02 398.0,163.02 398.0,163.10 397.0,163.10 397.0,163.00 396.0,163.00 396.0,162.89 395.0,162.89 395.0,162.02 394.0,162.02 394.0,162.08 393.0,162.08 393.0,162.77 392.0,162.77 392.0,162.86 391.0,162.86 391.0,162.84 390.0,162.84 390.0,163.06 389.0,163.06 389.0,162.03 388.0,162.03 388.0,162.15 387.0,162.15 387.0,162.77 386.0,162.77 386.0,162.99 385.0,162.99 385.0,163.06 384.0,163.06 384.0,162.96 383.0,162.96 383.0,162.13 382.0,162.13 382.0,162.06 381.0,162.06 381.0,162.76 380.0,162.76 380.0,162.77 379.0,162.77 379.0,162.89 378.0,162.89 378.0,162.99 377.0,162.99 377.0,162.01 376.0,162.01 376.0,162.01 375.0,162.01 375.0,162.92 374.0,162.92 374.0,162.96 373.0,162.96 373.0,163.04 372.0,163.04 372.0,162.80 371.0,162.80 371.0,162.16 370.0,162.16 370.0,162.04 369.0,162.04 369.0,162.94 368.0,162.94 368.0,162.88 367.0,162.88 367.0,163.05 366.0,163.05 366.0,162.79 365.0,162.79 365.0,162.02 364.0,162.02 364.0,162.14 363.0,162.14 363.0,162.80 362.0,162.80 362.0,162.94 361.0,162.94 361.0,163.29 360.0,163.29 360.0,163.27 359.0,163.27 359.0,163.43 358.0,163.43 358.0,163.35 357.0,163.35 357.0,163.19 356.0,163.19 356.0,163.56 355.0,163.56 355.0,163.57 354.0,163.57 354.0,163.67 353.0,163.67 353.0,163.25 352.0,163.25 352.0,163.29 351.0,163.29 351.0,163.39 350.0,163.39 350.0,163.32 349.0,163.32 349.0,163.49 348.0,163.49 348.0,163.37 347.0,163.37 347.0,163.46 346.0,163.46 346.0,163.29 345.0,163.29 345.0,163.18 344.0,163.18 344.0,163.13 343.0,163.13 343.0,162.88 342.0,162.88 342.0,163.10 341.0,163.10 341.0,162.20 340.0,162.20 340.0,162.12 339.0,162.12 339.0,163.07 338.0,163.07 338.0,163.25 337.0,163.25 337.0,162.96 336.0,162.96 336.0,163.08 335.0,163.08 335.0,162.08 334.0,162.08 334.0,162.07 333.0,162.07 333.0,163.02 332.0,163.02 332.0,163.15 331.0,163.15 331.0,163.10 330.0,163.10 330.0,162.95 329.0,162.95 329.0,162.07 328.0,162.07 328.0,162.17 327.0,162.17 327.0,163.10 326.0,163.10 326.0,163.10 325.0,163.10 325.0,163.08 324.0,163.08 324.0,163.13 323.0,163.13 323.0,162.06 322.0,162.06 322.0,162.11 321.0,162.11 321.0,162.05 320.0,162.05 320.0,162.10 319.0,162.10 319.0,162.05 318.0,162.05 318.0,162.18 317.0,162.18 317.0,162.12 316.0,162.12 316.0,162.15 315.0,162.15 315.0,162.19 314.0,162.19 314.0,162.19 313.0,162.19 313.0,162.03 312.0,162.03 312.0,162.11 311.0,162.11 311.0,162.16 310.0,162.16 310.0,162.03 309.0,162.03 309.0,162.43 308.0,162.43 308.0,162.53 307.0,162.53 307.0,162.49 306.0,162.49 306.0,162.59 305.0,162.59 305.0,162.63 304.0,162.63 304.0,162.52 303.0,162.52 303.0,162.62 302.0,162.62 302.0,162.81 301.0,162.81 301.0,162.65 300.0,162.65 300.0,162.73 299.0,162.73 299.0,162.68 298.0,162.68 298.0,162.67 297.0,162.67 297.0,162.77 296.0,162.77 296.0,162.81 295.0,162.81 295.0,162.76 294.0,162.76 294.0,162.80 293.0,162.80 293.0,162.54 292.0,162.54 292.0,162.53 291.0,162.53 291.0,162.82 290.0,162.82 290.0,162.68 289.0,162.68 289.0,162.86 288.0,162.86 288.0,162.59 287.0,162.59 287.0,162.74 286.0,162.74 286.0,162.58 285.0,162.58 285.0,162.64 284.0,162.64 284.0,162.86 283.0,162.86 283.0,162.62 282.0,162.62 282.0,162.89 281.0,162.89 281.0,162.54 280.0,162.54 280.0,162.61 279.0,162.61 279.0,162.67 278.0,162.67 278.0,162.70 277.0,162.70 277.0,162.65 276.0,162.65 276.0,162.60 275.0,162.60 275.0,163.11 274.0,163.11 274.0,163.51 273.0,163.51 273.0,163.56 272.0,163.56 272.0,163.79 271.0,163.79 271.0,163.45 270.0,163.45 270.0,163.69 269.0,163.69 269.0,163.26 268.0,163.26 268.0,163.66 267.0,163.66 267.0,163.57 266.0,163.57 266.0,163.26 265.0,163.26 265.0,163.29 264.0,163.29 264.0,163.61 263.0,163.61 263.0,163.38 262.0,163.38 262.0,163.35 261.0,163.35 261.0,163.31 260.0,163.31 260.0,163.32 259.0,163.32 259.0,163.32 258.0,163.32 258.0,163.82 257.0,163.82 257.0,163.78 256.0,163.78 256.0,163.44 255.0,163.44 255.0,163.78 254.0,163.78 254.0,163.81 253.0,163.81 253.0,163.91 252.0,163.91 252.0,163.58 251.0,163.58 251.0,163.69 250.0,163.69 250.0,163.67 249.0,163.67 249.0,163.79 248.0,163.79 248.0,163.56 247.0,163.56 247.0,163.81 246.0,163.81 246.0,164.01 245.0,164.01 245.0,163.56 244.0,163.56 244.0,163.43 243.0,163.43 243.0,163.53 242.0,163.53 242.0,164.04 241.0,164.04 241.0,163.55 240.0,163.55 240.0,163.46 239.0,163.46 239.0,163.60 238.0,163.60 238.0,164.07 237.0,164.07 237.0,163.59 236.0,163.59 236.0,163.87 235.0,163.87 235.0,163.76 234.0,163.76 234.0,163.78 233.0,163.78 233.0,163.98 232.0,163.98 232.0,163.54 231.0,163.54 231.0,163.47 230.0,163.47 230.0,163.80 229.0,163.80 229.0,163.82 228.0,163.82 228.0,164.01 227.0,164.01 227.0,163.82 226.0,163.82 226.0,163.90 225.0,163.90 225.0,163.57 224.0,163.57 224.0,163.46 223.0,163.46 223.0,164.03 222.0,164.03 222.0,163.74 221.0,163.74 221.0,163.76 220.0,163.76 220.0,163.92 219.0,163.92 219.0,163.73 218.0,163.73 218.0,163.81 217.0,163.81 217.0,163.61 216.0,163.61 216.0,163.78 215.0,163.78 215.0,163.86 214.0,163.86 214.0,163.86 213.0,163.86 213.0,163.96 212.0,163.96 212.0,162.03 211.0,162.03 211.0,162.18 210.0,162.18 210.0,162.16 209.0,162.16 209.0,162.20 208.0,162.20 208.0,162.11 207.0,162.11 207.0,162.20 206.0,162.20 206.0,162.23 205.0,162.23 205.0,162.09 204.0,162.09 204.0,162.21 203.0,162.21 203.0,162.10 202.0,162.10 202.0,162.20 201.0,162.20 201.0,162.07 200.0,162.07 200.0,162.21 199.0,162.21 199.0,162.11 198.0,162.11 198.0,162.14 197.0,162.14 197.0,162.08 196.0,162.08 196.0,162.16 195.0,162.16 195.0,162.15 194.0,162.15 194.0,162.28 193.0,162.28 193.0,162.19 192.0,162.19 192.0,162.26 191.0,162.26 191.0,162.23 190.0,162.23 190.0,162.22 189.0,162.22 189.0,162.18 188.0,162.18 188.0,162.23 187.0,162.23 187.0,162.24 186.0,162.24 186.0,162.24 185.0,162.24 185.0,162.25 184.0,162.25 184.0,162.34 183.0,162.34 183.0,162.19 182.0,162.19 182.0,162.29 181.0,162.29 181.0,162.30 180.0,162.30 180.0,162.29 179.0,162.29 179.0,162.21 178.0,162.21 178.0,162.32 177.0,162.32 177.0,162.25 176.0,162.25 176.0,162.33 175.0,162.33 175.0,162.23 174.0,162.23 174.0,162.27 173.0,162.27 173.0,162.38 172.0,162.38 172.0,162.39 171.0,162.39 171.0,162.43 170.0,162.43 170.0,162.41 169.0,162.41 169.0,162.31 168.0,162.31 168.0,162.24 167.0,162.24 167.0,162.39 166.0,162.39 166.0,162.43 165.0,162.43 165.0,162.36 164.0,162.36 164.0,162.27 163.0,162.27 163.0,162.30 162.0,162.30 162.0,162.45 161.0,162.45 161.0,162.48 160.0,162.48 160.0,162.31 159.0,162.31 159.0,162.58 158.0,162.58 158.0,162.57 157.0,162.57 157.0,162.51 156.0,162.51 156.0,162.46 155.0,162.46 155.0,162.52 154.0,162.52 154.0,162.36 153.0,162.36 153.0,162.53 152.0,162.53 152.0,162.50 151.0,162.50 151.0,162.51 150.0,162.51 150.0,162.61 149.0,162.61 149.0,162.47 148.0,162.47 148.0,162.68 147.0,162.68 147.0,162.48 146.0,162.48 146.0,162.64 145.0,162.64 145.0,162.46 144.0,162.46 144.0,162.57 143.0,162.57 143.0,162.70 142.0,162.70 142.0,162.45 141.0,162.45 141.0,162.75 140.0,162.75 140.0,162.55 139.0,162.55 139.0,162.67 138.0,162.67 138.0,162.76 137.0,162.76 137.0,162.63 136.0,162.63 136.0,162.57 135.0,162.57 135.0,162.75 134.0,162.75 134.0,162.80 133.0,162.80 133.0,162.57 132.0,162.57 132.0,162.79 131.0,162.79 131.0,162.83 130.0,162.83 130.0,162.83 129.0,162.83 129.0,162.60 128.0,162.60 128.0,162.63 127.0,162.63 127.0,162.71 126.0,162.71 126.0,162.75 125.0,162.75 125.0,162.68 124.0,162.68 124.0,163.07 123.0,163.07 123.0,162.95 122.0,162.95 122.0,162.94 121.0,162.94 121.0,163.29 120.0,163.29 120.0,163.24 119.0,163.24 119.0,163.01 118.0,163.01 118.0,163.14 117.0,163.14 117.0,163.17 116.0,163.17 116.0,163.00 115.0,163.00 115.0,162.98 114.0,162.98 114.0,163.28 113.0,163.28 113.0,163.26 112.0,163.26 112.0,163.11 111.0,163.11 111.0,163.38 110.0,163.38 110.0,163.23 109.0,163.23 109.0,163.08 108.0,163.08 108.0,163.20 107.0,163.20 107.0,163.00 106.0,163.00 106.0,163.24 105.0,163.24 105.0,163.26 104.0,163.26 104.0,163.03 103.0,163.03 103.0,163.50 102.0,163.50 102.0,163.27 101.0,163.27 101.0,163.40 100.0,163.40 100.0,163.43 99.0,163.43 99.0,163.57 98.0,163.57 98.0,163.16 97.0,163.16 97.0,163.37 96.0,163.37 96.0,163.51 95.0,163.51 95.0,163.56 94.0,163.56 94.0,163.21 93.0,163.21 93.0,163.35 92.0,163.35 92.0,163.28 91.0,163.28 91.0,163.48 90.0,163.48 90.0,163.38 89.0,163.38 89.0,163.71 88.0,163.71 88.0,163.61 87.0,163.61 87.0,163.54 86.0,163.54 86.0,163.82 85.0,163.82 85.0,163.53 84.0,163.53 84.0,163.84 83.0,163.84 83.0,163.65 82.0,163.65 82.0,163.46 81.0,163.46 81.0,163.83 80.0,163.83 80.0,163.50 79.0,163.50 79.0,163.59 78.0,163.59 78.0,163.61 77.0,163.61 77.0,164.06 76.0,164.06 76.0,164.28 75.0,164.28 75.0,164.36 74.0,164.36 74.0,163.90 73.0,163.90 73.0,164.13 72.0,164.13 72.0,162.17 71.0,162.17 71.0,162.16 70.0,162.16 70.0,162.11 69.0,162.11 69.0,162.23 68.0,162.23 68.0,162.10 67.0,162.10 67.0,162.15 66.0,162.15 66.0,162.11 65.0,162.11 65.0,162.28 64.0,162.28 64.0,162.16 63.0,162.16 63.0,163.49 62.0,163.49 62.0,163.56 61.0,163.56 61.0,163.30 60.0,163.30 60.0,163.50 59.0,163.50 59.0,163.72 58.0,163.72 58.0,163.56 57.0,163.56 57.0,163.58 56.0,163.58 56.0,163.48 55.0,163.48 55.0,163.52 54.0,163.52 54.0,163.85 53.0,163.85 53.0,164.02 52.0,164.02 52.0,163.53 51.0,163.53 51.0,163.64 50.0,163.64 50.0,164.08 49.0,164.08 49.0,163.99 48.0,163.99 48.0,164.27 47.0,164.27 47.0,163.87 46.0,163.87 46.0,164.49 45.0,164.49 45.0,164.36 44.0,164.36 44.0,164.05 43.0,164.05 43.0,164.09 42.0,164.09 42.0,164.35 41.0,164.35 41.0,164.49 40.0,164.49 40.0,164.35 39.0,164.35 39.0,164.62 38.0,164.62 38.0,162.25 37.0,162.25 37.0,162.29 36.0,162.29 36.0,162.12 35.0,162.12 35.0,162.30 34.0,162.30 34.0,162.33 33.0,162.33 33.0,162.16 32.0,162.16 32.0,162.33 31.0,162.33 31.0,162.23 30.0,162.23 30.0,162.25 29.0,162.25 29.0,162.19 28.0,162.19 28.0,162.28 27.0,162.28 27.0,162.37 26.0,162.37 26.0,162.42 25.0,162.42 25.0,162.40 24.0,162.40 24.0,162.42 23.0,162.42 23.0,164.49 22.0,164.49 22.0,164.17 21.0,164.17 21.0,164.18 20.0,164.18 20.0,164.71 19.0,164.71 19.0,164.70 18.0,164.70 18.0,164.83 17.0,164.83 17.0,164.38 16.0,164.38 16.0,164.98 15.0,164.98 15.0,164.92 14.0,164.92 14.0,165.13 13.0,165.13 13.0,165.75 12.0,165.75 12.0,165.34 11.0,165.34 11.0,165.34 10.0,165.34 10.0,166.27 9.0,166.27 9.0,166.40 8.0,166.40 8.0,166.59 7.0,166.59 7.0,166.05 6.0,166.05 6.0,166.95 5.0,166.95 5.0,166.48 4.0,166.48 4.0,167.03 3.0,167.03 3.0,167.40 2.0,167.40 2.0,166.87 1.0,166.87 1.0,166.33 0.0,166.33" fill="#000"/><rect x="0" y="160.7" width="463.20000000000005" height="1.7" fill="#c81010"/></svg>
<div style="left:341.70px;top:133.00px;width:1.20px;height:215.00px;background:#2ee82e"></div>
<div style="left:461.00px;top:133.00px;width:1.20px;height:215.00px;background:#ec5a46"></div>
<div style="left:615.10px;top:133.00px;width:1.20px;height:215.00px;background:#2ee82e"></div>
<div style="left:620.20px;top:131.30px;width:9.80px;height:230.00px;background:#1a1a1a"></div>
<div style="left:624.80px;top:144.00px;width:4.00px;height:202.60px;background:#38b4f0;border-radius:2px"></div>
<svg style="position:absolute;left:621.8px;top:132.2px;" width="10" height="12" viewBox="0 0 10 12"><circle cx="5" cy="6.1" r="4.8" fill="#161616" stroke="#3a3a3a" stroke-width="0.7"/></svg>
<div style="left:157.00px;top:348.00px;width:473.00px;height:13.00px;background:#1c1c1c"></div>
<div style="left:158.60px;top:349.00px;width:10.00px;height:11.30px;background:#1e1e1e;border:1px solid #7a7a7a"></div>
<svg style="position:absolute;left:158.6px;top:349px;" width="10" height="11.3" viewBox="0 0 10 11.3"><path d="M6 3 L3.5 5.6 L6 8.3" fill="none" stroke="#8a8a8a" stroke-width="1"/></svg>
<div style="left:169.70px;top:349.00px;width:356.20px;height:11.30px;background:#1e1e1e;border:1px solid #8c8c8c;border-radius:1px"></div>
<div style="left:565.10px;top:349.00px;width:12.00px;height:11.30px;background:#1e1e1e;border:1px solid #7a7a7a"></div>
<svg style="position:absolute;left:565.1px;top:349px;" width="12" height="11.3" viewBox="0 0 12 11.3"><path d="M5 3 L7.5 5.6 L5 8.3" fill="none" stroke="#8a8a8a" stroke-width="1"/></svg>
<div style="left:579.00px;top:352.60px;width:42.00px;height:3.60px;background:#3a3a3a;border-radius:2px"></div>
<div style="left:579.00px;top:352.60px;width:17.00px;height:3.60px;background:#38b4f0;border-radius:2px"></div>
<svg style="position:absolute;left:589px;top:348.5px;" width="12" height="12" viewBox="0 0 12 12"><circle cx="6" cy="6" r="5.2" fill="#161616" stroke="#3a3a3a" stroke-width="0.7"/></svg>
</body></html>
